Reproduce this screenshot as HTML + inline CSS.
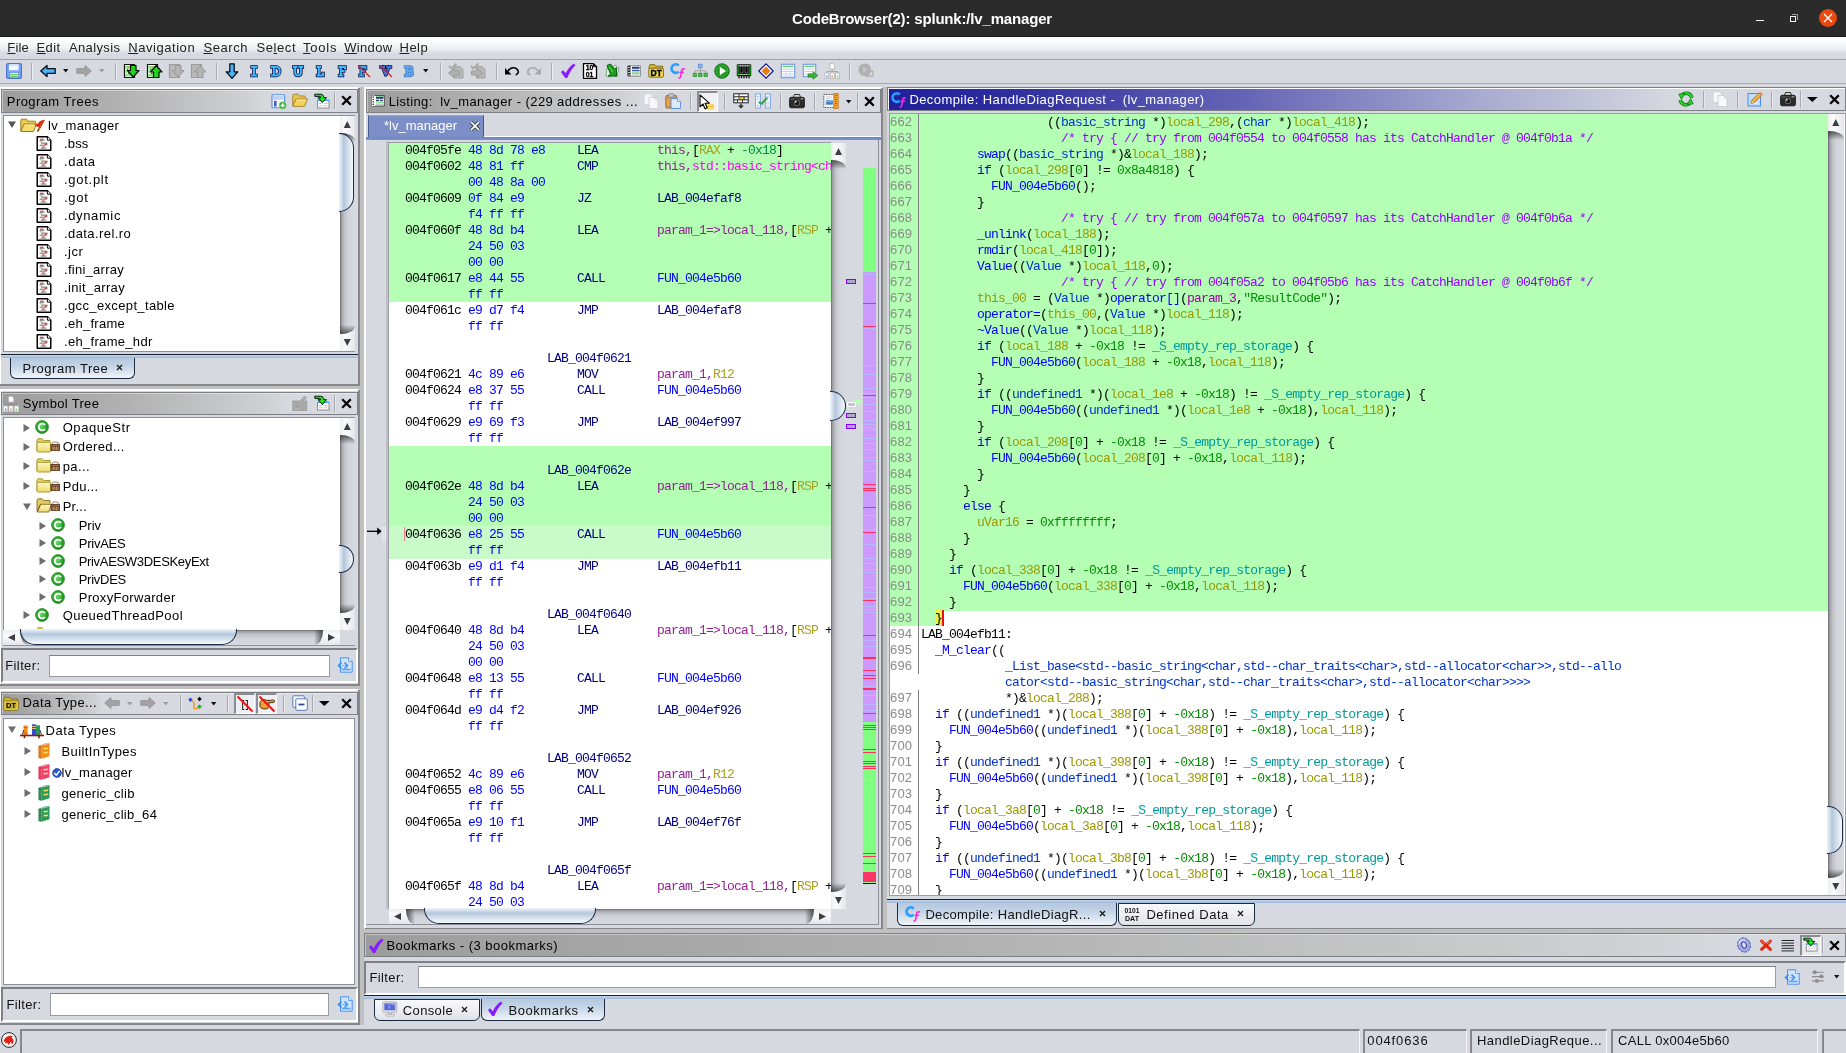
<!DOCTYPE html><html><head><meta charset="utf-8"><title>CodeBrowser</title><style>
html,body{margin:0;padding:0}
html{width:1846px;height:1053px;overflow:hidden}
body{width:1846px;height:1053px;overflow:hidden;background:#d6d9df;position:relative;font-family:"Liberation Sans",sans-serif}
div{position:absolute;box-sizing:border-box}
#w{left:0;top:0;width:1846px;height:1053px;will-change:transform;overflow:hidden}
.t{white-space:pre;line-height:16px;height:16px}
.m{font-family:"Liberation Mono",monospace;white-space:pre;font-size:13px;letter-spacing:-0.8px;line-height:16px;height:16px}
u{text-decoration:underline;text-underline-offset:1px}
</style></head><body><svg width="0" height="0" style="position:absolute"><defs><radialGradient id="gcls" cx="45%" cy="45%" r="60%"><stop offset="0" stop-color="#6ad86a"/><stop offset=".55" stop-color="#2eb02e"/><stop offset="1" stop-color="#148014"/></radialGradient><linearGradient id="gfold" x1="0" y1="0" x2="0" y2="1"><stop offset="0" stop-color="#fdf8c8"/><stop offset="1" stop-color="#ecd868"/></linearGradient></defs></svg><div id="w">
<div style="left:0px;top:0px;width:1846px;height:37px;background:#2b2b2b;border-bottom:1px solid #1a1a1a;"></div>
<div class="t" style="left:792px;top:10.80px;font-size:15px;letter-spacing:-0.174px;color:#fff;font-weight:bold;">CodeBrowser(2): splunk:/lv_manager</div>
<div style="left:1756px;top:19.8px;width:8.2px;height:1.5px;background:#f2f2f2;"></div>
<div style="left:1792px;top:14px;width:6.3px;height:6.3px;border-top:1px solid #9a9a9a;border-right:1px solid #9a9a9a;"></div>
<div style="left:1789.8px;top:15.8px;width:6.4px;height:6.4px;border:1.100px solid #f2f2f2;"></div>
<div style="left:1818.5px;top:8.8px;width:18.6px;height:18.6px;border-radius:10px;background:#e9480f;"></div>
<svg style="position:absolute;left:1822.800px;top:13.100px" width="10" height="10"><path d="M1 1L9 9M9 1L1 9" stroke="#fff" stroke-width="1.400" fill="none"/></svg>
<div style="left:0px;top:37px;width:1846px;height:23px;background:linear-gradient(#ffffff 0%,#fbfcfc 20%,#eef0f3 50%,#dadde3 72%,#d6d9df 78%);border-bottom:1px solid #9ea1a9;"></div>
<div class="t" style="left:7.3px;top:40.00px;font-size:13px;letter-spacing:0.188px;color:#222;"><u>F</u>ile</div>
<div class="t" style="left:36.5px;top:40.00px;font-size:13px;letter-spacing:0.425px;color:#222;"><u>E</u>dit</div>
<div class="t" style="left:68.9px;top:40.00px;font-size:13px;letter-spacing:0.386px;color:#222;">Analysis</div>
<div class="t" style="left:128.2px;top:40.00px;font-size:13px;letter-spacing:0.557px;color:#222;"><u>N</u>avigation</div>
<div class="t" style="left:203.4px;top:40.00px;font-size:13px;letter-spacing:0.601px;color:#222;"><u>S</u>earch</div>
<div class="t" style="left:256.5px;top:40.00px;font-size:13px;letter-spacing:0.578px;color:#222;">Se<u>l</u>ect</div>
<div class="t" style="left:303.1px;top:40.00px;font-size:13px;letter-spacing:0.750px;color:#222;"><u>T</u>ools</div>
<div class="t" style="left:344.2px;top:40.00px;font-size:13px;letter-spacing:0.344px;color:#222;"><u>W</u>indow</div>
<div class="t" style="left:399.5px;top:40.00px;font-size:13px;letter-spacing:0.491px;color:#222;"><u>H</u>elp</div>
<div style="left:0px;top:60px;width:1846px;height:24px;background:#d6d9df;"></div>
<div style="left:31px;top:63px;width:1px;height:17px;background:#a8abb1;"></div>
<div style="left:32px;top:63px;width:1px;height:17px;background:#eceef2;"></div>
<div style="left:115px;top:63px;width:1px;height:17px;background:#a8abb1;"></div>
<div style="left:116px;top:63px;width:1px;height:17px;background:#eceef2;"></div>
<div style="left:216px;top:63px;width:1px;height:17px;background:#a8abb1;"></div>
<div style="left:217px;top:63px;width:1px;height:17px;background:#eceef2;"></div>
<div style="left:440px;top:63px;width:1px;height:17px;background:#a8abb1;"></div>
<div style="left:441px;top:63px;width:1px;height:17px;background:#eceef2;"></div>
<div style="left:496px;top:63px;width:1px;height:17px;background:#a8abb1;"></div>
<div style="left:497px;top:63px;width:1px;height:17px;background:#eceef2;"></div>
<div style="left:551px;top:63px;width:1px;height:17px;background:#a8abb1;"></div>
<div style="left:552px;top:63px;width:1px;height:17px;background:#eceef2;"></div>
<div style="left:849px;top:63px;width:1px;height:17px;background:#a8abb1;"></div>
<div style="left:850px;top:63px;width:1px;height:17px;background:#eceef2;"></div>
<div style="left:6px;top:63px;width:16px;height:16px;"><svg width="100%" height="100%" viewBox="0 0 16 16" style="display:block;overflow:visible"><rect x="0.600" y="0.600" width="14.800" height="14.800" rx="1.500" fill="#7aa6f4" stroke="#4a72d8" stroke-width="1.200"/><rect x="3" y="1.200" width="9.500" height="6" fill="#f4f8ff"/><rect x="3" y="1.200" width="9.500" height="1.600" fill="#c8dcfa"/><rect x="3.500" y="9.500" width="9" height="5.300" fill="#dfeee0" stroke="#4a72d8" stroke-width=".5"/><rect x="4.300" y="11" width="7.400" height="1.300" fill="#68c868"/><rect x="4.300" y="13" width="7.400" height="1.100" fill="#68c868"/></svg></div>
<div style="left:40px;top:63px;width:16px;height:16px;"><svg width="100%" height="100%" viewBox="0 0 16 16" style="display:block;overflow:visible"><path d="M0.800 8l6.200-5.500v3.200h8.200v4.600h-8.200v3.200z" fill="#4ab4f8" stroke="#05101c" stroke-width="1.300" stroke-linejoin="round"/></svg></div>
<div style="left:58px;top:63px;width:16px;height:16px;"><svg width="100%" height="100%" viewBox="0 0 16 16" style="display:block;overflow:visible"><path d="M5 6h5.400l-2.700 3.600z" fill="#111"/></svg></div>
<div style="left:76px;top:63px;width:16px;height:16px;"><svg width="100%" height="100%" viewBox="0 0 16 16" style="display:block;overflow:visible"><path d="M15.200 8l-6.200-5.500v3.200h-8.200v4.600h8.200v3.200z" fill="#a4a4a4" stroke="#969696" stroke-width="1" stroke-linejoin="round"/></svg></div>
<div style="left:94px;top:63px;width:16px;height:16px;"><svg width="100%" height="100%" viewBox="0 0 16 16" style="display:block;overflow:visible"><path d="M5 6h5.400l-2.700 3.600z" fill="#9c9c9c"/></svg></div>
<div style="left:123px;top:63px;width:16px;height:16px;"><svg width="100%" height="100%" viewBox="0 0 16 16" style="display:block;overflow:visible"><path d="M1.5 1.5h10v13h-10z" fill="#fff" stroke="#111" stroke-width="1.2"/><rect x="2.3" y="3" width="8.4" height="2.600" fill="#7de87d"/><rect x="2.300" y="7" width="8.400" height="2.600" fill="#7de87d"/><rect x="2.300" y="11" width="8.400" height="2.400" fill="#7de87d"/><rect x="4" y="5.800" width="1.500" height="1.200" fill="#d22"/><rect x="5" y="9.800" width="1.500" height="1.200" fill="#d22"/><rect x="4.500" y="3.500" width="3" height="1" fill="#e8a060"/><path d="M7.500 2.500h5.500v5h3l-5.800 6.500l-5.700-6.500h3z" fill="#22d422" stroke="#041004" stroke-width="1.200" stroke-linejoin="round"/></svg></div>
<div style="left:146px;top:63px;width:16px;height:16px;"><svg width="100%" height="100%" viewBox="0 0 16 16" style="display:block;overflow:visible"><path d="M1.5 1.5h10v13h-10z" fill="#fff" stroke="#111" stroke-width="1.2"/><rect x="2.3" y="3" width="8.4" height="2.600" fill="#7de87d"/><rect x="2.300" y="7" width="8.400" height="2.600" fill="#7de87d"/><rect x="2.300" y="11" width="8.400" height="2.400" fill="#7de87d"/><rect x="4" y="5.800" width="1.500" height="1.200" fill="#d22"/><rect x="5" y="9.800" width="1.500" height="1.200" fill="#d22"/><rect x="4.500" y="3.500" width="3" height="1" fill="#e8a060"/><path d="M7.500 14.500h5.500v-5.500h3l-5.800-6.500l-5.700 6.500h3z" fill="#22d422" stroke="#041004" stroke-width="1.200" stroke-linejoin="round"/></svg></div>
<div style="left:168px;top:63px;width:16px;height:16px;"><svg width="100%" height="100%" viewBox="0 0 16 16" style="display:block;overflow:visible"><path d="M1.500 1.500h10v13h-10z" fill="#b8b8b8" stroke="#9c9c9c" stroke-width="1.200"/><path d="M7.500 2.500h5.500v5h3l-5.800 6.500l-5.700-6.500h3z" fill="#b4b4b4" stroke="#9c9c9c" stroke-width="1.100" stroke-linejoin="round"/></svg></div>
<div style="left:190px;top:63px;width:16px;height:16px;"><svg width="100%" height="100%" viewBox="0 0 16 16" style="display:block;overflow:visible"><path d="M1.500 1.500h10v13h-10z" fill="#b8b8b8" stroke="#9c9c9c" stroke-width="1.200"/><path d="M7.500 14.500h5.500v-5.500h3l-5.800-6.500l-5.700 6.500h3z" fill="#b4b4b4" stroke="#9c9c9c" stroke-width="1.100" stroke-linejoin="round"/></svg></div>
<div style="left:224px;top:63px;width:16px;height:16px;"><svg width="100%" height="100%" viewBox="0 0 16 16" style="display:block;overflow:visible"><path d="M5.800 0.800h4.400v8h3.600l-5.800 6.600l-5.800-6.600h3.600z" fill="#4ab4f8" stroke="#05101c" stroke-width="1.300" stroke-linejoin="round"/></svg></div>
<div style="left:246px;top:63px;width:16px;height:16px;"><svg width="100%" height="100%" viewBox="0 0 16 16" style="display:block;overflow:visible"><path d="M6 4h4M8 4v8.500M6 12.500h4" fill="none" stroke="#0a1040" stroke-width="3.5" stroke-linecap="square" stroke-linejoin="miter"/><path d="M6 4h4M8 4v8.500M6 12.500h4" fill="none" stroke="#40b4ff" stroke-width="2" stroke-linecap="square" stroke-linejoin="miter"/></svg></div>
<div style="left:268px;top:63px;width:16px;height:16px;"><svg width="100%" height="100%" viewBox="0 0 16 16" style="display:block;overflow:visible"><path d="M4 4h4c5 0 5 8.500 0 8.500h-4M5.800 4v8.500" fill="none" stroke="#0a1040" stroke-width="3.5" stroke-linecap="square" stroke-linejoin="miter"/><path d="M4 4h4c5 0 5 8.500 0 8.500h-4M5.800 4v8.500" fill="none" stroke="#40b4ff" stroke-width="2" stroke-linecap="square" stroke-linejoin="miter"/></svg></div>
<div style="left:290px;top:63px;width:16px;height:16px;"><svg width="100%" height="100%" viewBox="0 0 16 16" style="display:block;overflow:visible"><path d="M3.800 4h2.800M9.500 4h2.800M5.200 4v5.500c0 4 5.700 4 5.700 0v-5.500" fill="none" stroke="#0a1040" stroke-width="3.5" stroke-linecap="square" stroke-linejoin="miter"/><path d="M3.800 4h2.800M9.500 4h2.800M5.200 4v5.500c0 4 5.700 4 5.700 0v-5.500" fill="none" stroke="#40b4ff" stroke-width="2" stroke-linecap="square" stroke-linejoin="miter"/></svg></div>
<div style="left:312px;top:63px;width:16px;height:16px;"><svg width="100%" height="100%" viewBox="0 0 16 16" style="display:block;overflow:visible"><path d="M5.500 4h2.500M6.800 4v8.500M5.500 12.500h5.500v-2" fill="none" stroke="#0a1040" stroke-width="3.5" stroke-linecap="square" stroke-linejoin="miter"/><path d="M5.500 4h2.500M6.800 4v8.500M5.500 12.500h5.500v-2" fill="none" stroke="#40b4ff" stroke-width="2" stroke-linecap="square" stroke-linejoin="miter"/></svg></div>
<div style="left:334px;top:63px;width:16px;height:16px;"><svg width="100%" height="100%" viewBox="0 0 16 16" style="display:block;overflow:visible"><path d="M5.500 4h5.500v1.500M6.800 4v8.500M5.500 12.500h3M6.800 8h2.700" fill="none" stroke="#0a1040" stroke-width="3.5" stroke-linecap="square" stroke-linejoin="miter"/><path d="M5.500 4h5.500v1.500M6.800 4v8.500M5.500 12.500h3M6.800 8h2.700" fill="none" stroke="#40b4ff" stroke-width="2" stroke-linecap="square" stroke-linejoin="miter"/></svg></div>
<div style="left:356px;top:63px;width:16px;height:16px;"><svg width="100%" height="100%" viewBox="0 0 16 16" style="display:block;overflow:visible"><path d="M4 4h5.500v1.500M5.300 4v8.500M4 12.500h3M5.300 8h2.700" fill="none" stroke="#0a1040" stroke-width="3.5" stroke-linecap="square" stroke-linejoin="miter"/><path d="M4 4h5.500v1.500M5.300 4v8.500M4 12.500h3M5.300 8h2.700" fill="none" stroke="#3aa8f4" stroke-width="2" stroke-linecap="square" stroke-linejoin="miter"/><path d="M2.500 2.500L14 14" stroke="#e81818" stroke-width="1.300"/></svg></div>
<div style="left:378px;top:63px;width:16px;height:16px;"><svg width="100%" height="100%" viewBox="0 0 16 16" style="display:block;overflow:visible"><path d="M3 4h3M9.500 4h3M4.600 4l3.200 8l3.200-8" fill="none" stroke="#0a1040" stroke-width="3.5" stroke-linecap="square" stroke-linejoin="round"/><path d="M3 4h3M9.500 4h3M4.600 4l3.200 8l3.200-8" fill="none" stroke="#3a78e8" stroke-width="2" stroke-linecap="square" stroke-linejoin="round"/><path d="M2.500 2.500L14 14" stroke="#e81818" stroke-width="1.300"/></svg></div>
<div style="left:400.5px;top:63px;width:16px;height:16px;"><svg width="100%" height="100%" viewBox="0 0 16 16" style="display:block;overflow:visible"><path d="M4.500 4h4c3.200 0 3.200 4 0 4h-2.500M8.500 8c4 0 4 4.500 0 4.500h-4M6.200 4v8.500" fill="none" stroke="#4a7cc4" stroke-width="3.3" stroke-linecap="square" stroke-linejoin="miter"/><path d="M4.500 4h4c3.200 0 3.200 4 0 4h-2.500M8.500 8c4 0 4 4.500 0 4.500h-4M6.200 4v8.500" fill="none" stroke="#5aa4ec" stroke-width="2" stroke-linecap="square" stroke-linejoin="miter"/></svg></div>
<div style="left:418.2px;top:63px;width:16px;height:16px;"><svg width="100%" height="100%" viewBox="0 0 16 16" style="display:block;overflow:visible"><path d="M5 6h5.400l-2.700 3.600z" fill="#111"/></svg></div>
<div style="left:448px;top:63px;width:16px;height:16px;"><svg width="100%" height="100%" viewBox="0 0 16 16" style="display:block;overflow:visible"><path d="M6 3.500h6l3 3v8.500h-9z" fill="#b8b8b8" stroke="#a2a2a2"/><path d="M0.500 10l6-5v3h5v4h-5v3z" fill="#b0b0b0" stroke="#9a9a9a"/><path d="M1 3l2.500 2.500l5-5" fill="none" stroke="#a8a8a8" stroke-width="1.800"/></svg></div>
<div style="left:470px;top:63px;width:16px;height:16px;"><svg width="100%" height="100%" viewBox="0 0 16 16" style="display:block;overflow:visible"><path d="M7 3.500h5l3 3v8.500h-8z" fill="#b8b8b8" stroke="#a2a2a2"/><path d="M12.500 10l-6-5v3h-5v4h5v3z" fill="#b0b0b0" stroke="#9a9a9a"/><path d="M1 3l2.500 2.500l5-5" fill="none" stroke="#a8a8a8" stroke-width="1.800"/></svg></div>
<div style="left:504px;top:63px;width:16px;height:16px;"><svg width="100%" height="100%" viewBox="0 0 16 16" style="display:block;overflow:visible"><path d="M1 5v6.500h6.500z" fill="#000"/><path d="M4 8.200c2-4 7.500-5 10-0.700c.7 1.500 0 3.200-1.800 4.200" fill="none" stroke="#000" stroke-width="1.500" stroke-linecap="round"/></svg></div>
<div style="left:526px;top:63px;width:16px;height:16px;"><svg width="100%" height="100%" viewBox="0 0 16 16" style="display:block;overflow:visible"><path d="M15 5v6.500h-6.500z" fill="#a8a8a8"/><path d="M12 8.200c-2-4-7.500-5-10-0.700c-.7 1.500 0 3.200 1.800 4.200" fill="none" stroke="#a8a8a8" stroke-width="1.500" stroke-linecap="round"/></svg></div>
<div style="left:560px;top:63px;width:16px;height:16px;"><svg width="100%" height="100%" viewBox="0 0 16 16" style="display:block;overflow:visible"><path d="M1 9l2-1.800l2.800 3c2-4 4.500-7.200 8-9.700l1.700 1.700c-3.500 3.200-6 7.200-8.300 12.800h-2z" fill="#8a1aff"/></svg></div>
<div style="left:582px;top:63px;width:16px;height:16px;"><svg width="100%" height="100%" viewBox="0 0 16 16" style="display:block;overflow:visible"><path d="M1.500 0.700h10l3 3v11.600h-13z" fill="#fff" stroke="#000" stroke-width="1.300"/><path d="M11.500 0.700v3h3" fill="none" stroke="#000" stroke-width="1"/><text x="7.600" y="7.300" font-family="Liberation Sans" font-weight="bold" font-size="6.800" text-anchor="middle" fill="#000" stroke="#000" stroke-width=".3">10</text><text x="7.600" y="13.500" font-family="Liberation Sans" font-weight="bold" font-size="6.800" text-anchor="middle" fill="#000" stroke="#000" stroke-width=".3">01</text></svg></div>
<div style="left:604px;top:63px;width:16px;height:16px;"><svg width="100%" height="100%" viewBox="0 0 16 16" style="display:block;overflow:visible"><path d="M2 13l1-8l4 2l4-5l4 3l-2 9l-4-1.500l-3 1.500z" fill="#e8f4e8" stroke="#2a7a3a" stroke-width=".6"/><path d="M3 2.500l3.500-1.500l4 5l2-1.500v8.500h-8.500l2.500-2z" fill="#1ca01c" stroke="#0a500a" stroke-width=".9" stroke-linejoin="round"/><path d="M5 4l4 5" stroke="#5ad85a" stroke-width="1.200"/></svg></div>
<div style="left:626px;top:63px;width:16px;height:16px;"><svg width="100%" height="100%" viewBox="0 0 16 16" style="display:block;overflow:visible"><rect x="2.300" y="2.800" width="12" height="10.400" fill="#fff" stroke="#777" stroke-width=".8"/><rect x="1.500" y="2.800" width="3" height="10.400" fill="#222"/><path d="M2.200 4.500h1.500M2.200 7h1.500M2.200 9.500h1.500M2.200 12h1.500" stroke="#fff" stroke-width="1"/><rect x="6" y="3.800" width="7.500" height="2" fill="#2a3a8a"/><rect x="6" y="6.800" width="7.500" height="1.500" fill="#3a5aa0"/><rect x="6" y="9.300" width="7.500" height="1.600" fill="#7ad87a"/><path d="M6 12h7.500" stroke="#aaa" stroke-width=".8"/></svg></div>
<div style="left:648px;top:63px;width:16px;height:16px;"><svg width="100%" height="100%" viewBox="0 0 16 16" style="display:block;overflow:visible"><path d="M1 3.800l1-2.300h4.500l1.200 1.700h7v2.500h-13.700z" fill="#d8b82a" stroke="#7a6410" stroke-width=".9"/><rect x="0.800" y="5.200" width="14.600" height="9" rx="1" fill="#f4dc50" stroke="#7a6410" stroke-width=".9"/><text x="8.200" y="13" font-family="Liberation Sans" font-weight="bold" font-size="8.500" text-anchor="middle" fill="#000" stroke="#000" stroke-width=".4">DT</text></svg></div>
<div style="left:670px;top:63px;width:16px;height:16px;"><svg width="100%" height="100%" viewBox="0 0 16 16" style="display:block;overflow:visible"><path d="M8.700 2.600a4.200 4.200 0 1 0 0 6" fill="none" stroke="#2a9cff" stroke-width="2.700"/><path d="M14.800 6.300c-1.600-.9-2.800-.2-3.100 1.400l-1 5.800c-.2 1.400-1.200 1.800-2.200 1.200" fill="none" stroke="#ff22e6" stroke-width="1.600"/><path d="M9.800 9.300h4.200" stroke="#ff22e6" stroke-width="1.400"/></svg></div>
<div style="left:692px;top:63px;width:16px;height:16px;"><svg width="100%" height="100%" viewBox="0 0 16 16" style="display:block;overflow:visible"><rect x="6.500" y="1.200" width="3.600" height="3.600" fill="#8ab4f4" stroke="#5a88d8" stroke-width=".7"/><path d="M8.300 5v2.800M2.900 10v-2.200h10.800v2.200M8.300 7.800v2.200" fill="none" stroke="#9a9a9a" stroke-width=".8"/><rect x="1.200" y="10.200" width="3.400" height="3.400" fill="#4ac04a" stroke="#2a8a2a" stroke-width=".7"/><rect x="6.600" y="10.200" width="3.400" height="3.400" fill="#4ac04a" stroke="#2a8a2a" stroke-width=".7"/><rect x="12" y="10.200" width="3.400" height="3.400" fill="#4ac04a" stroke="#2a8a2a" stroke-width=".7"/></svg></div>
<div style="left:714px;top:63px;width:16px;height:16px;"><svg width="100%" height="100%" viewBox="0 0 16 16" style="display:block;overflow:visible"><circle cx="8" cy="8" r="7.300" fill="#1f9a1f" stroke="#0c5c0c" stroke-width=".8"/><circle cx="8" cy="8" r="5.800" fill="none" stroke="#5ad05a" stroke-width=".8" stroke-dasharray="1 1"/><path d="M5.800 3.800l6.400 4.200l-6.400 4.200z" fill="#fff"/></svg></div>
<div style="left:736px;top:63px;width:16px;height:16px;"><svg width="100%" height="100%" viewBox="0 0 16 16" style="display:block;overflow:visible"><rect x="0.800" y="1.200" width="14.400" height="12" rx="1" fill="#000"/><rect x="2" y="2.500" width="12" height="9" fill="none" stroke="#28e028" stroke-width="1"/><rect x="4" y="3.500" width="3" height="6.500" fill="#000" stroke="#bbb" stroke-width=".5"/><rect x="9" y="3.500" width="3" height="6.500" fill="#000" stroke="#bbb" stroke-width=".5"/><path d="M3 13.200v2M5.500 13.200v2M8 13.200v2M10.500 13.200v2M13 13.200v2" stroke="#000" stroke-width="1.300"/><path d="M4 11.500h8" stroke="#ddd" stroke-width=".8" stroke-dasharray="1 1"/></svg></div>
<div style="left:758px;top:63px;width:16px;height:16px;"><svg width="100%" height="100%" viewBox="0 0 16 16" style="display:block;overflow:visible"><path d="M8 0.800l7.200 7.200l-7.200 7.200l-7.200-7.200z" fill="#fff" stroke="#10108a" stroke-width="1.200"/><path d="M8 3.600l4.400 4.400l-4.400 4.400l-4.400-4.400z" fill="#e87a10"/></svg></div>
<div style="left:780px;top:63px;width:16px;height:16px;"><svg width="100%" height="100%" viewBox="0 0 16 16" style="display:block;overflow:visible"><rect x="1.300" y="1.300" width="13.400" height="13.400" fill="#fff" stroke="#7aa0e0" stroke-width="1.200"/><path d="M2.500 3.300h11" stroke="#5ac85a" stroke-width="1.200"/><path d="M2.500 6h11M2.500 8.500h11M2.500 11h11M2.500 13.200h11" stroke="#b8ccec" stroke-width=".9"/><path d="M6 5v9M10.500 5v9" stroke="#d0dcf0" stroke-width=".8"/></svg></div>
<div style="left:802px;top:63px;width:16px;height:16px;"><svg width="100%" height="100%" viewBox="0 0 16 16" style="display:block;overflow:visible"><rect x="1.300" y="1.300" width="12.400" height="12.400" fill="#fff" stroke="#7aa0e0" stroke-width="1.200"/><path d="M2.500 3.300h10" stroke="#5ac85a" stroke-width="1.200"/><path d="M2.500 6h10M2.500 8.500h10M2.500 11h10" stroke="#b8ccec" stroke-width=".9"/><path d="M6 11h5v-2.200l4.800 3.700l-4.800 3.700v-2.200h-5z" fill="#3ab43a" stroke="#1a7a1a" stroke-width=".7"/></svg></div>
<div style="left:824px;top:63px;width:16px;height:16px;"><svg width="100%" height="100%" viewBox="0 0 16 16" style="display:block;overflow:visible"><path d="M6 0.500h3l1.500 1.500v4h-4.500z" fill="#fff" stroke="#b4b4b4" stroke-width=".8"/><path d="M8.200 6v2.500M2.700 10.500v-2h11v2" fill="none" stroke="#a0a0a0" stroke-width=".9"/><rect x="0.800" y="10" width="4" height="5.300" fill="#fff" stroke="#b4b4b4" stroke-width=".8"/><rect x="6.200" y="10" width="4" height="5.300" fill="#fff" stroke="#b4b4b4" stroke-width=".8"/><rect x="11.600" y="10" width="4" height="5.300" fill="#fff" stroke="#b4b4b4" stroke-width=".8"/><rect x="2" y="12.500" width="1.600" height="2" fill="#6a9cf0"/><rect x="7.400" y="12.500" width="1.600" height="2" fill="#f0a050"/><rect x="12.800" y="12.500" width="1.600" height="2" fill="#7ae07a"/></svg></div>
<div style="left:858px;top:63px;width:16px;height:16px;"><svg width="100%" height="100%" viewBox="0 0 16 16" style="display:block;overflow:visible"><circle cx="6.800" cy="6.800" r="6.300" fill="#b0b0b0"/><path d="M5 3.500l5 3.300l-5 3.300z" fill="#c4c4c4"/><rect x="9" y="8" width="6" height="5" fill="none" stroke="#b0b0b0" stroke-width="1.300"/><path d="M7 12.500l2.500-2v4z" fill="#b0b0b0"/></svg></div>
<div style="left:0px;top:83.2px;width:1846px;height:1px;background:#a8aaae;"></div>
<div style="left:360px;top:87px;width:4px;height:938px;background:#c0c0c0;"></div>
<div style="left:883px;top:87px;width:4px;height:842px;background:#c0c0c0;"></div>
<div style="left:360px;top:929px;width:1486px;height:4px;background:#c0c0c0;"></div>
<div style="left:0px;top:385.5px;width:360px;height:3.5px;background:#c0c0c0;"></div>
<div style="left:0px;top:685.5px;width:360px;height:3.5px;background:#c0c0c0;"></div>
<div style="left:0px;top:87px;width:358px;height:2px;background:#fff;"></div>
<div style="left:0px;top:87px;width:1.3px;height:296.5px;background:#fff;"></div>
<div style="left:0px;top:383.5px;width:360px;height:2px;background:#85878c;"></div>
<div style="left:358px;top:88px;width:2px;height:297.5px;background:#85878c;"></div>
<div style="left:0px;top:389px;width:358px;height:2px;background:#fff;"></div>
<div style="left:0px;top:389px;width:1.3px;height:294.5px;background:#fff;"></div>
<div style="left:0px;top:683.5px;width:360px;height:2px;background:#85878c;"></div>
<div style="left:358px;top:390px;width:2px;height:295.5px;background:#85878c;"></div>
<div style="left:0px;top:689px;width:358px;height:2px;background:#fff;"></div>
<div style="left:0px;top:689px;width:1.3px;height:334px;background:#fff;"></div>
<div style="left:0px;top:1023px;width:360px;height:2px;background:#85878c;"></div>
<div style="left:358px;top:690px;width:2px;height:335px;background:#85878c;"></div>
<div style="left:364px;top:87px;width:518px;height:2px;background:#fff;"></div>
<div style="left:364px;top:87px;width:2px;height:841px;background:#fff;"></div>
<div style="left:881px;top:88px;width:2px;height:841px;background:#85878c;"></div>
<div style="left:365px;top:927.5px;width:518px;height:1.5px;background:#85878c;"></div>
<div style="left:887px;top:927.5px;width:959px;height:1.5px;background:#85878c;"></div>
<div style="left:1px;top:89px;width:357px;height:24px;border:1px solid #7e8085;background:linear-gradient(to right,#9c9c9c 0.00%,#b2b2b2 33.72%,#cfd0d3 68.94%,#d6d9df 74.93%);box-shadow:inset 1px 1px 0 rgba(255,255,255,.4);"></div>
<div class="t" style="left:6.85px;top:94.00px;font-size:13px;letter-spacing:0.407px;color:#000;">Program</div>
<div class="t" style="left:63.5px;top:94.00px;font-size:13px;letter-spacing:0.550px;color:#000;">Trees</div>
<div style="left:271px;top:94px;width:15px;height:15px;"><svg width="100%" height="100%" viewBox="0 0 15 15.500" style="display:block;overflow:visible"><rect x="0.800" y="0.800" width="13" height="13.400" rx=".8" fill="#fff" stroke="#5a8ae4" stroke-width="1.200"/><rect x="2.500" y="2.800" width="9.600" height="2.600" fill="#bcd0f4" stroke="#9ab8ec" stroke-width=".5"/><rect x="2.800" y="7" width="2.800" height="6" fill="#4a5ac8"/><path d="M7 8h5M7 10h3" stroke="#d0dcf4" stroke-width="1"/><circle cx="11.800" cy="11.800" r="3.700" fill="#2cac2c" stroke="#9ad89a" stroke-width=".6"/><path d="M9.600 11.800h4.400M11.800 9.600v4.400" stroke="#fff" stroke-width="1.500"/></svg></div>
<div style="left:292px;top:93px;width:16px;height:14px;"><svg width="100%" height="100%" viewBox="0 0 16 14" style="display:block;overflow:visible"><path d="M0.800 12.500v-10c0-.8 .5-1.300 1.300-1.300h3.700l1.500 1.800h5c.8 0 1.300 .5 1.300 1.300v1.700" fill="#e8c850" stroke="#a8842a" stroke-width="1"/><path d="M0.800 13.300l3.200-7.300h11.500l-3 7.300z" fill="#f0d460" stroke="#a8842a" stroke-width="1"/><path d="M4.500 7h10" stroke="#fff0a8" stroke-width=".8"/></svg></div>
<div style="left:314px;top:93px;width:16px;height:16px;"><svg width="100%" height="100%" viewBox="0 0 16 16" style="display:block;overflow:visible"><rect x="3.500" y="7.500" width="11.500" height="7.500" fill="#fff" stroke="#8c8c8c" stroke-width="1"/><path d="M3.500 7.300h11.500" stroke="#3a9aff" stroke-width="1.400"/><path d="M5 10.500h3.500M9.800 10.500h3.800M5 12.700h3.500M9.800 12.700h3.800" stroke="#c8cad0" stroke-width="1"/><path d="M0.800 1.200h5.700c2.300 0 3.300 1.500 3.300 3.500h2.700l-4.200 4.800l-4.200-4.800h2.700c0-.9-.4-1.300-1.300-1.300h-4.700z" fill="#22e822" stroke="#000" stroke-width=".9" stroke-linejoin="round"/></svg></div>
<div style="left:334px;top:92px;width:1px;height:17px;background:#a6a8ae;"></div>
<div style="left:335px;top:92px;width:1px;height:17px;background:#e6e8ec;"></div>
<svg style="position:absolute;left:340.5px;top:95.3px" width="11" height="11"><path d="M1.200 1.200L9.8 9.8M9.8 1.200L1.200 9.8" stroke="#000" stroke-width="2.3" fill="none"/></svg>
<div style="left:2.5px;top:115px;width:352.8px;height:237px;background:#fff;border:1px solid #8e9197;"></div>
<svg style="position:absolute;left:7px;top:121px" width="10" height="8"><path d="M1 0.500L9 0.500L5 7Z" fill="#555"/></svg>
<div style="left:20px;top:118px;width:17px;height:14px;"><svg width="100%" height="100%" viewBox="0 0 17 14" style="display:block;overflow:visible"><path d="M0.800 13v-10.500c0-.8 .5-1.300 1.300-1.300h4.500l1.500 2h6.500c.8 0 1.300 .5 1.300 1.300v1.500" fill="#e8c850" stroke="#9a7a20" stroke-width="1"/><path d="M0.800 13.500l3.200-7.500h12.500l-3 7.500z" fill="#f4dc6a" stroke="#9a7a20" stroke-width="1"/><path d="M4.500 7h10.500" stroke="#fff4b0" stroke-width=".8"/></svg></div>
<div style="left:33.5px;top:119px;width:11px;height:13px;"><svg width="100%" height="100%" viewBox="0 0 11 13" style="display:block;overflow:visible"><path d="M3.500 12.500l6.500-11.500" stroke="#8a5a20" stroke-width="1.800"/><path d="M0 5.500c2 .5 4-.5 5-2.500c1.500-1.500 3.500-2 5.500-2l-4 7.500c-2-.3-4.500-1-6.500-3z" fill="#e02810"/><path d="M5 10l5-9" stroke="#c8c820" stroke-width=".6" stroke-dasharray="1 1"/></svg></div>
<div class="t" style="left:48px;top:118.00px;font-size:13px;letter-spacing:0.333px;color:#000;">lv_manager</div>
<div style="left:36px;top:136.3px;width:16px;height:15.5px;"><svg width="100%" height="100%" viewBox="0 0 16 16" style="display:block;overflow:visible"><path d="M1 0.800h10.500l3.500 3.500v10.500h-14z" fill="#fff" stroke="#000" stroke-width="1.500" stroke-linejoin="round"/><path d="M11.500 0.800v3.500h3.500" fill="#fff" stroke="#000" stroke-width="1"/><path d="M3.500 4.500h5M5 7.500h6.500M3.500 9.500h7M4.500 12.500h6" stroke="#9a9a9a" stroke-width="1.500"/><path d="M4 3.300h3.500M9 8.500h2.500M6 11.300h2.500" stroke="#c81a1a" stroke-width="1.100"/><path d="M3.500 6h3" stroke="#c8a060" stroke-width="1"/></svg></div>
<div class="t" style="left:64px;top:136.00px;font-size:13px;letter-spacing:0.148px;color:#000;">.bss</div>
<div style="left:36px;top:154.3px;width:16px;height:15.5px;"><svg width="100%" height="100%" viewBox="0 0 16 16" style="display:block;overflow:visible"><path d="M1 0.800h10.500l3.500 3.500v10.500h-14z" fill="#fff" stroke="#000" stroke-width="1.500" stroke-linejoin="round"/><path d="M11.500 0.800v3.500h3.500" fill="#fff" stroke="#000" stroke-width="1"/><path d="M3.500 4.500h5M5 7.500h6.500M3.500 9.500h7M4.500 12.500h6" stroke="#9a9a9a" stroke-width="1.500"/><path d="M4 3.300h3.500M9 8.500h2.500M6 11.300h2.500" stroke="#c81a1a" stroke-width="1.100"/><path d="M3.500 6h3" stroke="#c8a060" stroke-width="1"/></svg></div>
<div class="t" style="left:64px;top:154.00px;font-size:13px;letter-spacing:0.529px;color:#000;">.data</div>
<div style="left:36px;top:172.3px;width:16px;height:15.5px;"><svg width="100%" height="100%" viewBox="0 0 16 16" style="display:block;overflow:visible"><path d="M1 0.800h10.500l3.500 3.500v10.500h-14z" fill="#fff" stroke="#000" stroke-width="1.500" stroke-linejoin="round"/><path d="M11.500 0.800v3.500h3.500" fill="#fff" stroke="#000" stroke-width="1"/><path d="M3.500 4.500h5M5 7.500h6.500M3.500 9.500h7M4.500 12.500h6" stroke="#9a9a9a" stroke-width="1.500"/><path d="M4 3.300h3.500M9 8.500h2.500M6 11.300h2.500" stroke="#c81a1a" stroke-width="1.100"/><path d="M3.500 6h3" stroke="#c8a060" stroke-width="1"/></svg></div>
<div class="t" style="left:64px;top:172.00px;font-size:13px;letter-spacing:0.721px;color:#000;">.got.plt</div>
<div style="left:36px;top:190.3px;width:16px;height:15.5px;"><svg width="100%" height="100%" viewBox="0 0 16 16" style="display:block;overflow:visible"><path d="M1 0.800h10.500l3.500 3.500v10.500h-14z" fill="#fff" stroke="#000" stroke-width="1.500" stroke-linejoin="round"/><path d="M11.500 0.800v3.500h3.500" fill="#fff" stroke="#000" stroke-width="1"/><path d="M3.500 4.500h5M5 7.500h6.500M3.500 9.500h7M4.500 12.500h6" stroke="#9a9a9a" stroke-width="1.500"/><path d="M4 3.300h3.500M9 8.500h2.500M6 11.300h2.500" stroke="#c81a1a" stroke-width="1.100"/><path d="M3.500 6h3" stroke="#c8a060" stroke-width="1"/></svg></div>
<div class="t" style="left:64px;top:190.00px;font-size:13px;letter-spacing:0.687px;color:#000;">.got</div>
<div style="left:36px;top:208.3px;width:16px;height:15.5px;"><svg width="100%" height="100%" viewBox="0 0 16 16" style="display:block;overflow:visible"><path d="M1 0.800h10.500l3.500 3.500v10.500h-14z" fill="#fff" stroke="#000" stroke-width="1.500" stroke-linejoin="round"/><path d="M11.500 0.800v3.500h3.500" fill="#fff" stroke="#000" stroke-width="1"/><path d="M3.500 4.500h5M5 7.500h6.500M3.500 9.500h7M4.500 12.500h6" stroke="#9a9a9a" stroke-width="1.500"/><path d="M4 3.300h3.500M9 8.500h2.500M6 11.300h2.500" stroke="#c81a1a" stroke-width="1.100"/><path d="M3.500 6h3" stroke="#c8a060" stroke-width="1"/></svg></div>
<div class="t" style="left:64px;top:208.00px;font-size:13px;letter-spacing:0.623px;color:#000;">.dynamic</div>
<div style="left:36px;top:226.3px;width:16px;height:15.5px;"><svg width="100%" height="100%" viewBox="0 0 16 16" style="display:block;overflow:visible"><path d="M1 0.800h10.500l3.500 3.500v10.500h-14z" fill="#fff" stroke="#000" stroke-width="1.500" stroke-linejoin="round"/><path d="M11.500 0.800v3.500h3.500" fill="#fff" stroke="#000" stroke-width="1"/><path d="M3.500 4.500h5M5 7.500h6.500M3.500 9.500h7M4.500 12.500h6" stroke="#9a9a9a" stroke-width="1.500"/><path d="M4 3.300h3.500M9 8.500h2.500M6 11.300h2.500" stroke="#c81a1a" stroke-width="1.100"/><path d="M3.500 6h3" stroke="#c8a060" stroke-width="1"/></svg></div>
<div class="t" style="left:64px;top:226.00px;font-size:13px;letter-spacing:0.420px;color:#000;">.data.rel.ro</div>
<div style="left:36px;top:244.3px;width:16px;height:15.5px;"><svg width="100%" height="100%" viewBox="0 0 16 16" style="display:block;overflow:visible"><path d="M1 0.800h10.500l3.500 3.500v10.500h-14z" fill="#fff" stroke="#000" stroke-width="1.500" stroke-linejoin="round"/><path d="M11.500 0.800v3.500h3.500" fill="#fff" stroke="#000" stroke-width="1"/><path d="M3.500 4.500h5M5 7.500h6.500M3.500 9.500h7M4.500 12.500h6" stroke="#9a9a9a" stroke-width="1.500"/><path d="M4 3.300h3.500M9 8.500h2.500M6 11.300h2.500" stroke="#c81a1a" stroke-width="1.100"/><path d="M3.500 6h3" stroke="#c8a060" stroke-width="1"/></svg></div>
<div class="t" style="left:64px;top:244.00px;font-size:13px;letter-spacing:0.503px;color:#000;">.jcr</div>
<div style="left:36px;top:262.3px;width:16px;height:15.5px;"><svg width="100%" height="100%" viewBox="0 0 16 16" style="display:block;overflow:visible"><path d="M1 0.800h10.500l3.500 3.500v10.500h-14z" fill="#fff" stroke="#000" stroke-width="1.500" stroke-linejoin="round"/><path d="M11.500 0.800v3.500h3.500" fill="#fff" stroke="#000" stroke-width="1"/><path d="M3.500 4.500h5M5 7.500h6.500M3.500 9.500h7M4.500 12.500h6" stroke="#9a9a9a" stroke-width="1.500"/><path d="M4 3.300h3.500M9 8.500h2.500M6 11.300h2.500" stroke="#c81a1a" stroke-width="1.100"/><path d="M3.500 6h3" stroke="#c8a060" stroke-width="1"/></svg></div>
<div class="t" style="left:64px;top:262.00px;font-size:13px;letter-spacing:0.271px;color:#000;">.fini_array</div>
<div style="left:36px;top:280.3px;width:16px;height:15.5px;"><svg width="100%" height="100%" viewBox="0 0 16 16" style="display:block;overflow:visible"><path d="M1 0.800h10.500l3.500 3.500v10.500h-14z" fill="#fff" stroke="#000" stroke-width="1.500" stroke-linejoin="round"/><path d="M11.500 0.800v3.500h3.500" fill="#fff" stroke="#000" stroke-width="1"/><path d="M3.500 4.500h5M5 7.500h6.500M3.500 9.500h7M4.500 12.500h6" stroke="#9a9a9a" stroke-width="1.500"/><path d="M4 3.300h3.500M9 8.500h2.500M6 11.300h2.500" stroke="#c81a1a" stroke-width="1.100"/><path d="M3.500 6h3" stroke="#c8a060" stroke-width="1"/></svg></div>
<div class="t" style="left:64px;top:280.00px;font-size:13px;letter-spacing:0.364px;color:#000;">.init_array</div>
<div style="left:36px;top:298.3px;width:16px;height:15.5px;"><svg width="100%" height="100%" viewBox="0 0 16 16" style="display:block;overflow:visible"><path d="M1 0.800h10.500l3.500 3.500v10.500h-14z" fill="#fff" stroke="#000" stroke-width="1.500" stroke-linejoin="round"/><path d="M11.500 0.800v3.500h3.500" fill="#fff" stroke="#000" stroke-width="1"/><path d="M3.500 4.500h5M5 7.500h6.500M3.500 9.500h7M4.500 12.500h6" stroke="#9a9a9a" stroke-width="1.500"/><path d="M4 3.300h3.500M9 8.500h2.500M6 11.300h2.500" stroke="#c81a1a" stroke-width="1.100"/><path d="M3.500 6h3" stroke="#c8a060" stroke-width="1"/></svg></div>
<div class="t" style="left:64px;top:298.00px;font-size:13px;letter-spacing:0.363px;color:#000;">.gcc_except_table</div>
<div style="left:36px;top:316.3px;width:16px;height:15.5px;"><svg width="100%" height="100%" viewBox="0 0 16 16" style="display:block;overflow:visible"><path d="M1 0.800h10.500l3.500 3.500v10.500h-14z" fill="#fff" stroke="#000" stroke-width="1.500" stroke-linejoin="round"/><path d="M11.500 0.800v3.500h3.500" fill="#fff" stroke="#000" stroke-width="1"/><path d="M3.500 4.500h5M5 7.500h6.500M3.500 9.500h7M4.500 12.500h6" stroke="#9a9a9a" stroke-width="1.500"/><path d="M4 3.300h3.500M9 8.500h2.500M6 11.300h2.500" stroke="#c81a1a" stroke-width="1.100"/><path d="M3.500 6h3" stroke="#c8a060" stroke-width="1"/></svg></div>
<div class="t" style="left:64px;top:316.00px;font-size:13px;letter-spacing:0.283px;color:#000;">.eh_frame</div>
<div style="left:36px;top:334.3px;width:16px;height:15.5px;"><svg width="100%" height="100%" viewBox="0 0 16 16" style="display:block;overflow:visible"><path d="M1 0.800h10.500l3.500 3.500v10.500h-14z" fill="#fff" stroke="#000" stroke-width="1.500" stroke-linejoin="round"/><path d="M11.500 0.800v3.500h3.500" fill="#fff" stroke="#000" stroke-width="1"/><path d="M3.500 4.500h5M5 7.500h6.500M3.500 9.500h7M4.500 12.500h6" stroke="#9a9a9a" stroke-width="1.500"/><path d="M4 3.300h3.500M9 8.500h2.500M6 11.300h2.500" stroke="#c81a1a" stroke-width="1.100"/><path d="M3.500 6h3" stroke="#c8a060" stroke-width="1"/></svg></div>
<div class="t" style="left:64px;top:334.00px;font-size:13px;letter-spacing:0.309px;color:#000;">.eh_frame_hdr</div>
<div style="left:340px;top:116px;width:14.5px;height:235px;background:linear-gradient(to right,#eceef1 0%,#fbfbfc 35%,#e4e6ea 100%);"></div>
<div style="left:340px;top:133px;width:14.5px;height:201px;border-radius:0 14.5px 14.5px 0 / 0 8px 8px 0;background:linear-gradient(to right,#64666b 0%,#9c9ea3 10%,#bfc1c6 28%,#d1d4da 55%,#d6d9df 100%);"></div>
<div style="left:340px;top:133px;width:14.5px;height:9px;border-radius:0 14.5px 0 0 / 0 8px 0 0;background:linear-gradient(rgba(40,42,46,.75),rgba(40,42,46,0));"></div>
<div style="left:340px;top:325px;width:14.5px;height:9px;border-radius:0 0 14.5px 0 / 0 0 8px 0;background:linear-gradient(rgba(40,42,46,0),rgba(40,42,46,.75));"></div>
<svg style="position:absolute;left:340px;top:116px" width="14.5" height="16"><path d="M3.75 12L7.25 5L10.75 12Z" fill="#3c3e42"/></svg>
<svg style="position:absolute;left:340px;top:334px" width="14.5" height="16"><path d="M3.75 5L7.25 12L10.75 5Z" fill="#3c3e42"/></svg>
<div style="left:339px;top:133px;width:15.1px;height:78.7px;border:1.200px solid #1c2c48;border-left:none;border-radius:0 15px 15px 0;background:linear-gradient(to right,#f0f4f9 0%,#b4c8dc 35%,#cfdcea 60%,#f6f9fc 100%);"></div>
<div style="left:1px;top:354px;width:357px;height:1px;background:#15202e;"></div>
<div style="left:1px;top:355px;width:357px;height:3px;background:linear-gradient(#c6d9ee,#9db6d4);"></div>
<div style="left:10px;top:358px;width:124.7px;height:21.4px;border:1px solid #1c2a40;border-top:none;border-radius:0 0 6px 6px;background:linear-gradient(#b4c8de 0%,#c3d4e6 40%,#f0f4f9 100%);"></div>
<div class="t" style="left:22.5px;top:361.00px;font-size:13px;letter-spacing:0.527px;color:#111;">Program Tree</div>
<svg style="position:absolute;left:116.2px;top:364.2px" width="7" height="7"><path d="M1 1L6 6M6 1L1 6" stroke="#1a1a1a" stroke-width="1.250" fill="none"/></svg>
<div style="left:1px;top:391.5px;width:357px;height:23px;border:1px solid #7e8085;background:linear-gradient(to right,#9c9c9c 0.00%,#b2b2b2 36.51%,#cfd0d3 74.64%,#d6d9df 81.13%);box-shadow:inset 1px 1px 0 rgba(255,255,255,.4);"></div>
<div style="left:3.2px;top:395.8px;width:16px;height:16px;"><svg width="100%" height="100%" viewBox="0 0 16 16" style="display:block;overflow:visible"><path d="M5.800 0.500h3.200l1.500 1.500v4h-4.700z" fill="#fff" stroke="#c4c4c4" stroke-width=".7"/><path d="M8 6v2.500M2.500 10.500v-2h11v2" fill="none" stroke="#8c8c8c" stroke-width=".8"/><rect x="0.600" y="10" width="4" height="5.500" fill="#fff" stroke="#c4c4c4" stroke-width=".7"/><rect x="6" y="10" width="4" height="5.500" fill="#fff" stroke="#c4c4c4" stroke-width=".7"/><rect x="11.400" y="10" width="4" height="5.500" fill="#fff" stroke="#c4c4c4" stroke-width=".7"/><rect x="1.800" y="12.500" width="1.600" height="2.200" fill="#6a9cf0"/><rect x="7.200" y="12.500" width="1.600" height="2.200" fill="#f0a050"/><rect x="12.600" y="12.500" width="1.600" height="2.200" fill="#7ae07a"/></svg></div>
<div class="t" style="left:22.8px;top:396.00px;font-size:13px;letter-spacing:0.311px;color:#000;">Symbol Tree</div>
<div style="left:291.5px;top:395px;width:16px;height:16px;"><svg width="100%" height="100%" viewBox="0 0 16 16" style="display:block;overflow:visible"><rect x="0.800" y="6" width="14" height="9.500" fill="#a8a8a8" stroke="#9c9c9c" stroke-width=".8"/><path d="M3 13.500h5.500" stroke="#b8b8b8" stroke-width="1"/><path d="M4.500 12.500l1.500-4l6.500-7.500l2 1.700l-6.500 7.500z" fill="#b4b4b4" stroke="#9a9a9a" stroke-width=".8"/><path d="M7 7.500l2 1.700M8.500 5.800l2 1.700M10 4l2 1.700" stroke="#9a9a9a" stroke-width=".7"/></svg></div>
<div style="left:314px;top:395px;width:16px;height:16px;"><svg width="100%" height="100%" viewBox="0 0 16 16" style="display:block;overflow:visible"><rect x="3.500" y="7.500" width="11.500" height="7.500" fill="#fff" stroke="#8c8c8c" stroke-width="1"/><path d="M3.500 7.300h11.500" stroke="#3a9aff" stroke-width="1.400"/><path d="M5 10.500h3.500M9.800 10.500h3.800M5 12.700h3.500M9.800 12.700h3.800" stroke="#c8cad0" stroke-width="1"/><path d="M0.800 1.200h5.700c2.300 0 3.300 1.500 3.300 3.500h2.700l-4.200 4.800l-4.200-4.800h2.700c0-.9-.4-1.300-1.300-1.300h-4.700z" fill="#22e822" stroke="#000" stroke-width=".9" stroke-linejoin="round"/></svg></div>
<div style="left:334px;top:394.5px;width:1px;height:17px;background:#a6a8ae;"></div>
<div style="left:335px;top:394.5px;width:1px;height:17px;background:#e6e8ec;"></div>
<svg style="position:absolute;left:340.6px;top:397.8px" width="11" height="11"><path d="M1.200 1.200L9.8 9.8M9.8 1.200L1.200 9.8" stroke="#000" stroke-width="2.3" fill="none"/></svg>
<div style="left:2.5px;top:417px;width:352.8px;height:229px;background:#fff;border:1px solid #8e9197;"></div>
<svg style="position:absolute;left:22.8px;top:422.8px" width="8" height="10"><path d="M0.500 1L7 5L0.500 9Z" fill="#6e6e6e"/></svg>
<div style="left:34.5px;top:420.4px;width:14px;height:14px;"><svg width="100%" height="100%" viewBox="0 0 14 14" style="display:block;overflow:visible"><circle cx="7" cy="7" r="6.400" fill="url(#gcls)" stroke="#1e8a1e" stroke-width=".8"/><path d="M9.900 5a3.400 3.400 0 1 0 0 4" fill="none" stroke="#fff" stroke-width="1.900"/></svg></div>
<div class="t" style="left:62.7px;top:420.00px;font-size:13px;letter-spacing:0.569px;color:#000;">OpaqueStr</div>
<svg style="position:absolute;left:22.8px;top:441.6px" width="8" height="10"><path d="M0.500 1L7 5L0.500 9Z" fill="#6e6e6e"/></svg>
<div style="left:35.5px;top:438.4px;width:24px;height:15px;"><svg width="100%" height="100%" viewBox="0 0 24 15" style="display:block;overflow:visible"><path d="M1 13v-11l1-1.200h4.200l1.500 1.700h6.300v3" fill="#e4d468" stroke="#a09020" stroke-width=".9"/><rect x="1" y="4.300" width="13.500" height="9.700" rx="1" fill="url(#gfold)" stroke="#a09020" stroke-width=".9"/><path d="M16 6.500c0-3.500 6.500-3.500 6.500 0" fill="none" stroke="#b4a48c" stroke-width="1.200"/><rect x="15" y="6.500" width="8.500" height="6" fill="#9a6a42" stroke="#5a3a20" stroke-width=".9"/><path d="M15 8.500h8.500" stroke="#5a3a20" stroke-width=".7"/><path d="M17.800 8.500v4M20.600 8.500v4" stroke="#c8a070" stroke-width=".7"/></svg></div>
<div class="t" style="left:62.7px;top:439.00px;font-size:13px;letter-spacing:0.357px;color:#000;">Ordered...</div>
<svg style="position:absolute;left:22.8px;top:461.4px" width="8" height="10"><path d="M0.500 1L7 5L0.500 9Z" fill="#6e6e6e"/></svg>
<div style="left:35.5px;top:458.2px;width:24px;height:15px;"><svg width="100%" height="100%" viewBox="0 0 24 15" style="display:block;overflow:visible"><path d="M1 13v-11l1-1.200h4.200l1.500 1.700h6.300v3" fill="#e4d468" stroke="#a09020" stroke-width=".9"/><rect x="1" y="4.300" width="13.500" height="9.700" rx="1" fill="url(#gfold)" stroke="#a09020" stroke-width=".9"/><path d="M16 6.500c0-3.500 6.500-3.500 6.500 0" fill="none" stroke="#b4a48c" stroke-width="1.200"/><rect x="15" y="6.500" width="8.500" height="6" fill="#9a6a42" stroke="#5a3a20" stroke-width=".9"/><path d="M15 8.500h8.500" stroke="#5a3a20" stroke-width=".7"/><path d="M17.800 8.500v4M20.600 8.500v4" stroke="#c8a070" stroke-width=".7"/></svg></div>
<div class="t" style="left:62.7px;top:459.00px;font-size:13px;letter-spacing:0.438px;color:#000;">pa...</div>
<svg style="position:absolute;left:22.8px;top:481.4px" width="8" height="10"><path d="M0.500 1L7 5L0.500 9Z" fill="#6e6e6e"/></svg>
<div style="left:35.5px;top:478.2px;width:24px;height:15px;"><svg width="100%" height="100%" viewBox="0 0 24 15" style="display:block;overflow:visible"><path d="M1 13v-11l1-1.200h4.200l1.500 1.700h6.300v3" fill="#e4d468" stroke="#a09020" stroke-width=".9"/><rect x="1" y="4.300" width="13.500" height="9.700" rx="1" fill="url(#gfold)" stroke="#a09020" stroke-width=".9"/><path d="M16 6.500c0-3.500 6.500-3.500 6.500 0" fill="none" stroke="#b4a48c" stroke-width="1.200"/><rect x="15" y="6.500" width="8.500" height="6" fill="#9a6a42" stroke="#5a3a20" stroke-width=".9"/><path d="M15 8.500h8.500" stroke="#5a3a20" stroke-width=".7"/><path d="M17.800 8.500v4M20.600 8.500v4" stroke="#c8a070" stroke-width=".7"/></svg></div>
<div class="t" style="left:62.7px;top:479.00px;font-size:13px;letter-spacing:0.277px;color:#000;">Pdu...</div>
<svg style="position:absolute;left:22px;top:502.9px" width="10" height="8"><path d="M1 0.500L9 0.500L5 7Z" fill="#6e6e6e"/></svg>
<div style="left:35.5px;top:498.4px;width:24px;height:15px;"><svg width="100%" height="100%" viewBox="0 0 24 15" style="display:block;overflow:visible"><path d="M1 13v-11l1-1.200h4.200l1.500 1.700h6.300v3" fill="#e4c860" stroke="#8a6a20" stroke-width=".9"/><path d="M1 14l3.300-7.700h11.200l-2.800 7.700z" fill="url(#gfold)" stroke="#8a6a20" stroke-width=".9"/><path d="M1.500 13.500l3.200-7" stroke="#6a4a10" stroke-width=".8"/><path d="M16 6.500c0-3.500 6.500-3.500 6.500 0" fill="none" stroke="#b4a48c" stroke-width="1.200"/><rect x="15" y="6.500" width="8.500" height="6" fill="#9a6a42" stroke="#5a3a20" stroke-width=".9"/><path d="M15 8.500h8.500" stroke="#5a3a20" stroke-width=".7"/><path d="M17.800 8.500v4M20.600 8.500v4" stroke="#c8a070" stroke-width=".7"/></svg></div>
<div class="t" style="left:62.7px;top:499.00px;font-size:13px;letter-spacing:0.259px;color:#000;">Pr...</div>
<svg style="position:absolute;left:38.8px;top:520.8px" width="8" height="10"><path d="M0.500 1L7 5L0.500 9Z" fill="#6e6e6e"/></svg>
<div style="left:50.5px;top:518.4px;width:14px;height:14px;"><svg width="100%" height="100%" viewBox="0 0 14 14" style="display:block;overflow:visible"><circle cx="7" cy="7" r="6.400" fill="url(#gcls)" stroke="#1e8a1e" stroke-width=".8"/><path d="M9.900 5a3.400 3.400 0 1 0 0 4" fill="none" stroke="#fff" stroke-width="1.900"/></svg></div>
<div class="t" style="left:78.7px;top:518.00px;font-size:13px;letter-spacing:0.002px;color:#000;">Priv</div>
<svg style="position:absolute;left:38.8px;top:538.4px" width="8" height="10"><path d="M0.500 1L7 5L0.500 9Z" fill="#6e6e6e"/></svg>
<div style="left:50.5px;top:536px;width:14px;height:14px;"><svg width="100%" height="100%" viewBox="0 0 14 14" style="display:block;overflow:visible"><circle cx="7" cy="7" r="6.400" fill="url(#gcls)" stroke="#1e8a1e" stroke-width=".8"/><path d="M9.900 5a3.400 3.400 0 1 0 0 4" fill="none" stroke="#fff" stroke-width="1.900"/></svg></div>
<div class="t" style="left:78.7px;top:536.00px;font-size:13px;letter-spacing:-0.225px;color:#000;">PrivAES</div>
<svg style="position:absolute;left:38.8px;top:556.4px" width="8" height="10"><path d="M0.500 1L7 5L0.500 9Z" fill="#6e6e6e"/></svg>
<div style="left:50.5px;top:554px;width:14px;height:14px;"><svg width="100%" height="100%" viewBox="0 0 14 14" style="display:block;overflow:visible"><circle cx="7" cy="7" r="6.400" fill="url(#gcls)" stroke="#1e8a1e" stroke-width=".8"/><path d="M9.900 5a3.400 3.400 0 1 0 0 4" fill="none" stroke="#fff" stroke-width="1.900"/></svg></div>
<div class="t" style="left:78.7px;top:554.00px;font-size:13px;letter-spacing:-0.318px;color:#000;">PrivAESW3DESKeyExt</div>
<svg style="position:absolute;left:38.8px;top:574.4px" width="8" height="10"><path d="M0.500 1L7 5L0.500 9Z" fill="#6e6e6e"/></svg>
<div style="left:50.5px;top:572px;width:14px;height:14px;"><svg width="100%" height="100%" viewBox="0 0 14 14" style="display:block;overflow:visible"><circle cx="7" cy="7" r="6.400" fill="url(#gcls)" stroke="#1e8a1e" stroke-width=".8"/><path d="M9.900 5a3.400 3.400 0 1 0 0 4" fill="none" stroke="#fff" stroke-width="1.900"/></svg></div>
<div class="t" style="left:78.7px;top:572.00px;font-size:13px;letter-spacing:-0.260px;color:#000;">PrivDES</div>
<svg style="position:absolute;left:38.8px;top:592.4px" width="8" height="10"><path d="M0.500 1L7 5L0.500 9Z" fill="#6e6e6e"/></svg>
<div style="left:50.5px;top:590px;width:14px;height:14px;"><svg width="100%" height="100%" viewBox="0 0 14 14" style="display:block;overflow:visible"><circle cx="7" cy="7" r="6.400" fill="url(#gcls)" stroke="#1e8a1e" stroke-width=".8"/><path d="M9.900 5a3.400 3.400 0 1 0 0 4" fill="none" stroke="#fff" stroke-width="1.900"/></svg></div>
<div class="t" style="left:78.7px;top:590.00px;font-size:13px;letter-spacing:0.316px;color:#000;">ProxyForwarder</div>
<svg style="position:absolute;left:22.8px;top:610.4px" width="8" height="10"><path d="M0.500 1L7 5L0.500 9Z" fill="#6e6e6e"/></svg>
<div style="left:34.5px;top:608px;width:14px;height:14px;"><svg width="100%" height="100%" viewBox="0 0 14 14" style="display:block;overflow:visible"><circle cx="7" cy="7" r="6.400" fill="url(#gcls)" stroke="#1e8a1e" stroke-width=".8"/><path d="M9.900 5a3.400 3.400 0 1 0 0 4" fill="none" stroke="#fff" stroke-width="1.900"/></svg></div>
<div class="t" style="left:62.7px;top:608.00px;font-size:13px;letter-spacing:0.427px;color:#000;">QueuedThreadPool</div>
<div style="left:35.500px;top:624px;width:24px;height:6px;overflow:hidden"><div style="left:0;top:2.500px;width:24px;height:15px"><svg width="100%" height="100%" viewBox="0 0 24 15" style="display:block;overflow:visible"><path d="M1 13v-11l1-1.200h4.200l1.500 1.700h6.300v3" fill="#e4d468" stroke="#a09020" stroke-width=".9"/><rect x="1" y="4.300" width="13.500" height="9.700" rx="1" fill="url(#gfold)" stroke="#a09020" stroke-width=".9"/><path d="M16 6.500c0-3.500 6.500-3.500 6.500 0" fill="none" stroke="#b4a48c" stroke-width="1.200"/><rect x="15" y="6.500" width="8.500" height="6" fill="#9a6a42" stroke="#5a3a20" stroke-width=".9"/><path d="M15 8.500h8.500" stroke="#5a3a20" stroke-width=".7"/><path d="M17.800 8.500v4M20.600 8.500v4" stroke="#c8a070" stroke-width=".7"/></svg></div></div>
<div style="left:340px;top:418px;width:14.5px;height:212px;background:linear-gradient(to right,#eceef1 0%,#fbfbfc 35%,#e4e6ea 100%);"></div>
<div style="left:340px;top:435px;width:14.5px;height:178px;border-radius:0 14.5px 14.5px 0 / 0 8px 8px 0;background:linear-gradient(to right,#64666b 0%,#9c9ea3 10%,#bfc1c6 28%,#d1d4da 55%,#d6d9df 100%);"></div>
<div style="left:340px;top:435px;width:14.5px;height:9px;border-radius:0 14.5px 0 0 / 0 8px 0 0;background:linear-gradient(rgba(40,42,46,.75),rgba(40,42,46,0));"></div>
<div style="left:340px;top:604px;width:14.5px;height:9px;border-radius:0 0 14.5px 0 / 0 0 8px 0;background:linear-gradient(rgba(40,42,46,0),rgba(40,42,46,.75));"></div>
<svg style="position:absolute;left:340px;top:418px" width="14.5" height="16"><path d="M3.75 12L7.25 5L10.75 12Z" fill="#3c3e42"/></svg>
<svg style="position:absolute;left:340px;top:613px" width="14.5" height="16"><path d="M3.75 5L7.25 12L10.75 5Z" fill="#3c3e42"/></svg>
<div style="left:339px;top:544.5px;width:15.1px;height:28.8px;border:1.200px solid #1c2c48;border-left:none;border-radius:0 15px 15px 0;background:linear-gradient(to right,#f0f4f9 0%,#b4c8dc 35%,#cfdcea 60%,#f6f9fc 100%);"></div>
<div style="left:3px;top:630px;width:337px;height:15px;background:linear-gradient(#eceef1 0%,#fbfbfc 35%,#e4e6ea 100%);"></div>
<div style="left:20px;top:630px;width:303px;height:15px;border-radius:0 0 8px 8px / 0 0 15px 15px;background:linear-gradient(#64666b 0%,#9c9ea3 10%,#bfc1c6 28%,#d1d4da 55%,#d6d9df 100%);"></div>
<div style="left:20px;top:630px;width:9px;height:15px;border-radius:0 0 0 8px / 0 0 0 15px;background:linear-gradient(to right,rgba(40,42,46,.75),rgba(40,42,46,0));"></div>
<div style="left:314px;top:630px;width:9px;height:15px;border-radius:0 0 8px 0 / 0 0 15px 0;background:linear-gradient(to right,rgba(40,42,46,0),rgba(40,42,46,.75));"></div>
<svg style="position:absolute;left:3px;top:630px" width="16" height="15"><path d="M12 4L5 7.5L12 11Z" fill="#3c3e42"/></svg>
<svg style="position:absolute;left:323px;top:630px" width="16" height="15"><path d="M5 4L12 7.5L5 11Z" fill="#3c3e42"/></svg>
<div style="left:20px;top:629px;width:216.5px;height:15.6px;border:1.200px solid #1c2c48;border-top:none;border-radius:0 0 15px 15px;background:linear-gradient(#f0f4f9 0%,#b4c8dc 35%,#cfdcea 60%,#f6f9fc 100%);"></div>
<div style="left:340px;top:630px;width:15px;height:15px;background:#d6d9df;"></div>
<div style="left:1px;top:648.4px;width:357px;height:34.6px;background:#d6d9df;border-top:2px solid #7e8085;border-left:2px solid #7e8085;border-bottom:2px solid #fff;border-right:2px solid #fff;"></div>
<div class="t" style="left:5.3px;top:658.00px;font-size:13px;letter-spacing:0.371px;color:#111;">Filter:</div>
<div style="left:49.2px;top:654.5px;width:281px;height:22px;background:#fff;border:1px solid #9a9ca2;border-top-color:#7e8187;"></div>
<div style="left:337px;top:657px;width:16px;height:16px;"><svg width="100%" height="100%" viewBox="0 0 16 16" style="display:block;overflow:visible"><path d="M3.500 0.800h8l3.700 3.700v10.700h-11.700z" fill="#cfe4fc" stroke="#4a92f0" stroke-width="1" stroke-linejoin="round"/><path d="M11.500 0.800v3.700h3.700" fill="#eaf3fe" stroke="#4a92f0" stroke-width=".8"/><path d="M5 12.500h8.500" stroke="#5aa0f4" stroke-width="1.600"/><path d="M4.500 5.500l-3 3l3 3" fill="none" stroke="#3a8af0" stroke-width="1.500"/><path d="M7.500 5.500l3 3l-3 3" fill="none" stroke="#3a8af0" stroke-width="1.500"/><path d="M5 8.500h4" stroke="#7ab4f8" stroke-width="1"/></svg></div>
<div style="left:1px;top:691.5px;width:357px;height:23px;border:1px solid #7e8085;background:linear-gradient(to right,#9c9c9c 0.00%,#b2b2b2 12.68%,#cfd0d3 25.92%,#d6d9df 28.17%);box-shadow:inset 1px 1px 0 rgba(255,255,255,.4);"></div>
<div style="left:3px;top:695.8px;width:16px;height:16px;"><svg width="100%" height="100%" viewBox="0 0 16 16" style="display:block;overflow:visible"><path d="M0.800 3.800l1-2.500h4.500l1.200 1.700h7.300v2.800h-14z" fill="#d8b82a" stroke="#7a6410" stroke-width=".8"/><rect x="0.700" y="4.800" width="14.600" height="9.500" rx="1" fill="#f0d840" stroke="#7a6410" stroke-width=".8"/><rect x="2.500" y="6.300" width="11" height="6.500" fill="#a08a20" opacity=".55"/><text x="8" y="12.300" font-family="Liberation Sans" font-weight="bold" font-size="7.500" text-anchor="middle" fill="#000">DT</text></svg></div>
<div class="t" style="left:22.6px;top:695.00px;font-size:13px;letter-spacing:0.379px;color:#000;">Data Type...</div>
<div style="left:104px;top:695px;width:16px;height:16px;"><svg width="100%" height="100%" viewBox="0 0 16 16" style="display:block;overflow:visible"><path d="M0.800 8l6.200-5.500v3.200h8.200v4.600h-8.200v3.200z" fill="#a4a4a4" stroke="#969696" stroke-width="1" stroke-linejoin="round"/></svg></div>
<div style="left:121.8px;top:695.5px;width:16px;height:16px;"><svg width="100%" height="100%" viewBox="0 0 16 16" style="display:block;overflow:visible"><path d="M5 6h5.400l-2.700 3.600z" fill="#9c9c9c"/></svg></div>
<div style="left:139.8px;top:695px;width:16px;height:16px;"><svg width="100%" height="100%" viewBox="0 0 16 16" style="display:block;overflow:visible"><path d="M15.200 8l-6.200-5.500v3.200h-8.200v4.600h8.200v3.200z" fill="#a4a4a4" stroke="#969696" stroke-width="1" stroke-linejoin="round"/></svg></div>
<div style="left:158px;top:695.5px;width:16px;height:16px;"><svg width="100%" height="100%" viewBox="0 0 16 16" style="display:block;overflow:visible"><path d="M5 6h5.400l-2.700 3.600z" fill="#9c9c9c"/></svg></div>
<div style="left:179.5px;top:694.5px;width:1px;height:17px;background:#a6a8ae;"></div>
<div style="left:180.5px;top:694.5px;width:1px;height:17px;background:#e6e8ec;"></div>
<div style="left:187.8px;top:695.5px;width:16px;height:16px;"><svg width="100%" height="100%" viewBox="0 0 16 16" style="display:block;overflow:visible"><path d="M2.500 1.500l2.200 2.200l-2.200 2.200l-2.200-2.200z" fill="#1a4ae0"/><path d="M3.500 4.500l2.500 2v6h3.500" fill="none" stroke="#f08a10" stroke-width="1.200"/><path d="M8 12.500l1.500-1.500v3z" fill="#f08a10"/><path d="M11.500 0.800l2.200 2.200l-2.200 2.200l-2.200-2.200z" fill="#000"/><path d="M11.500 8.300l2.400 2.400l-2.400 2.400l-2.400-2.400z" fill="#22b422"/></svg></div>
<div style="left:206.2px;top:695.5px;width:16px;height:16px;"><svg width="100%" height="100%" viewBox="0 0 16 16" style="display:block;overflow:visible"><path d="M5 6h5.400l-2.700 3.600z" fill="#111"/></svg></div>
<div style="left:227px;top:694.5px;width:1px;height:17px;background:#a6a8ae;"></div>
<div style="left:228px;top:694.5px;width:1px;height:17px;background:#e6e8ec;"></div>
<div style="left:233.6px;top:692.8px;width:21px;height:21px;background:#eeeff2;border-top:2px solid #8a8c91;border-left:2px solid #8a8c91;border-bottom:1.500px solid #fff;border-right:1.500px solid #fff;"></div>
<div style="left:236.5px;top:695.5px;width:16px;height:16px;"><svg width="100%" height="100%" viewBox="0 0 16 16" style="display:block;overflow:visible"><text x="8" y="11.500" font-family="Liberation Mono" font-weight="bold" font-size="11" text-anchor="middle" fill="#000" textLength="8" lengthAdjust="spacingAndGlyphs">[]</text><path d="M0.500 0.500l15 15" stroke="#e81818" stroke-width="2"/></svg></div>
<div style="left:256px;top:692.8px;width:21px;height:21px;background:#eeeff2;border-top:2px solid #8a8c91;border-left:2px solid #8a8c91;border-bottom:1.500px solid #fff;border-right:1.500px solid #fff;"></div>
<div style="left:258.8px;top:695.5px;width:16px;height:16px;"><svg width="100%" height="100%" viewBox="0 0 16 16" style="display:block;overflow:visible"><path d="M1 6.500c1-3 5-3.500 7-2l6.500-.5c1.500 0 1.500 2.500 0 2.500l-5 .3c1 .5 1 2 0 2.300c.8 .8 .3 2-.7 2c.5 1-.3 2-1.500 1.800c-3.500 .3-5.500-.5-6.300-2.400z" fill="#f0a030" stroke="#3a2008" stroke-width=".9"/><path d="M0.500 0.500l15 15" stroke="#e81818" stroke-width="2"/></svg></div>
<div style="left:283px;top:694.5px;width:1px;height:17px;background:#a6a8ae;"></div>
<div style="left:284px;top:694.5px;width:1px;height:17px;background:#e6e8ec;"></div>
<div style="left:292px;top:695px;width:16px;height:16px;"><svg width="100%" height="100%" viewBox="0 0 16 16" style="display:block;overflow:visible"><rect x="0.800" y="0.800" width="11.500" height="11.500" rx="1" fill="#f4f6fc" stroke="#5a7ab8" stroke-width="1"/><rect x="3.800" y="3.800" width="11.500" height="11.500" rx="1" fill="#fff" stroke="#5a7ab8" stroke-width="1"/><path d="M6.500 9.500h6" stroke="#2a4a9a" stroke-width="1.800"/></svg></div>
<div style="left:312px;top:694.5px;width:1px;height:17px;background:#a6a8ae;"></div>
<div style="left:313px;top:694.5px;width:1px;height:17px;background:#e6e8ec;"></div>
<div style="left:318.9px;top:701px;width:10.6px;height:5px;"><svg width="100%" height="100%" viewBox="0 0 10.600 5" style="display:block;overflow:visible"><path d="M0 0h10.600l-5.300 5z" fill="#000"/></svg></div>
<svg style="position:absolute;left:340.7px;top:697.5px" width="11" height="11"><path d="M1.200 1.200L9.8 9.8M9.8 1.200L1.200 9.8" stroke="#000" stroke-width="2.3" fill="none"/></svg>
<div style="left:2.5px;top:718px;width:352.8px;height:267.2px;background:#fff;border:1px solid #8e9197;"></div>
<svg style="position:absolute;left:6.8px;top:725.5px" width="10" height="8"><path d="M1 0.500L9 0.500L5 7Z" fill="#6e6e6e"/></svg>
<div style="left:20px;top:723.5px;width:24px;height:15px;"><svg width="100%" height="100%" viewBox="0 0 24 15" style="display:block;overflow:visible"><rect x="3.600" y="1.500" width="4" height="9.500" fill="#f08c1a"/><path d="M3.600 3.500h4M3.600 9h4" stroke="#d85a10" stroke-width=".8"/><rect x="12" y="0.300" width="4" height="10.700" fill="#3a4ae0"/><path d="M12 2.500h4M12 4.500h4" stroke="#ffe060" stroke-width=".8"/><rect x="16" y="1.300" width="4" height="9.700" fill="#2a9a5a"/><path d="M2.500 11l1-5M21.500 11l-1.500-5" stroke="#111" stroke-width=".8"/><path d="M0 11.500h24" stroke="#8a1a10" stroke-width="1.600"/><path d="M4.500 12v2.300M19 12v2.300" stroke="#8a1a10" stroke-width="1.600"/></svg></div>
<div class="t" style="left:45.6px;top:723.00px;font-size:13px;letter-spacing:0.518px;color:#000;">Data Types</div>
<svg style="position:absolute;left:23.8px;top:745.5px" width="8" height="10"><path d="M0.500 1L7 5L0.500 9Z" fill="#6e6e6e"/></svg>
<div style="left:37.5px;top:743px;width:12px;height:16px;"><svg width="100%" height="100%" viewBox="0 0 12 16" style="display:block;overflow:visible"><path d="M3.500 2.800l8-2v12.500l-8 2.500z" fill="#f08c1a"/><path d="M0.500 3.200l3-0.400v13l-3-0.800z" fill="#d86a10"/><path d="M0.500 3.200l7.500-2.700l3.500 0.300l-8 2z" fill="#fff" stroke="#d86a10" stroke-width=".5"/><path d="M5.500 6.300l1.500-1l1.500 .5l1.500-1M5.500 10.300l1.500-1l1.500 .5l1.500-1" fill="none" stroke="#ffe060" stroke-width="1.300"/><path d="M2 5v9" stroke="#ffd0a0" stroke-width=".6" stroke-dasharray=".8 .8"/></svg></div>
<div class="t" style="left:61.5px;top:744.00px;font-size:13px;letter-spacing:0.375px;color:#000;">BuiltInTypes</div>
<svg style="position:absolute;left:23.8px;top:766.5px" width="8" height="10"><path d="M0.500 1L7 5L0.500 9Z" fill="#6e6e6e"/></svg>
<div style="left:37.5px;top:764px;width:12px;height:16px;"><svg width="100%" height="100%" viewBox="0 0 12 16" style="display:block;overflow:visible"><path d="M3.500 2.800l8-2v12.500l-8 2.500z" fill="#f0406a"/><path d="M0.500 3.200l3-0.400v13l-3-0.800z" fill="#d82a50"/><path d="M0.500 3.200l7.500-2.700l3.500 0.300l-8 2z" fill="#fff" stroke="#d82a50" stroke-width=".5"/><path d="M5.500 6.300l1.500-1l1.500 .5l1.500-1M5.500 10.300l1.500-1l1.500 .5l1.500-1" fill="none" stroke="#ffe8a0" stroke-width="1.300"/><path d="M2 5v9" stroke="#ffd0a0" stroke-width=".6" stroke-dasharray=".8 .8"/></svg></div>
<div style="left:51.5px;top:767.5px;width:10px;height:10px;"><svg width="100%" height="100%" viewBox="0 0 10 10" style="display:block;overflow:visible"><circle cx="5" cy="5" r="4.400" fill="#2a5ad0" stroke="#1a3a8a" stroke-width=".7"/><path d="M2.300 5l2 2.200l3.300-4.200" fill="none" stroke="#fff" stroke-width="1.500"/></svg></div>
<div class="t" style="left:61.5px;top:765.00px;font-size:13px;letter-spacing:0.333px;color:#000;">lv_manager</div>
<svg style="position:absolute;left:23.8px;top:787.5px" width="8" height="10"><path d="M0.500 1L7 5L0.500 9Z" fill="#6e6e6e"/></svg>
<div style="left:37.5px;top:785px;width:12px;height:16px;"><svg width="100%" height="100%" viewBox="0 0 12 16" style="display:block;overflow:visible"><path d="M3.500 2.800l8-2v12.500l-8 2.500z" fill="#2a9a5a"/><path d="M0.500 3.200l3-0.400v13l-3-0.800z" fill="#1a7a44"/><path d="M0.500 3.200l7.500-2.700l3.500 0.300l-8 2z" fill="#fff" stroke="#1a7a44" stroke-width=".5"/><path d="M5.500 6.300l1.500-1l1.500 .5l1.500-1M5.500 10.300l1.500-1l1.500 .5l1.500-1" fill="none" stroke="#ffe060" stroke-width="1.300"/><path d="M2 5v9" stroke="#ffd0a0" stroke-width=".6" stroke-dasharray=".8 .8"/></svg></div>
<div class="t" style="left:61.5px;top:786.00px;font-size:13px;letter-spacing:0.327px;color:#000;">generic_clib</div>
<svg style="position:absolute;left:23.8px;top:808.5px" width="8" height="10"><path d="M0.500 1L7 5L0.500 9Z" fill="#6e6e6e"/></svg>
<div style="left:37.5px;top:806px;width:12px;height:16px;"><svg width="100%" height="100%" viewBox="0 0 12 16" style="display:block;overflow:visible"><path d="M3.500 2.800l8-2v12.500l-8 2.500z" fill="#2a9a5a"/><path d="M0.500 3.200l3-0.400v13l-3-0.800z" fill="#1a7a44"/><path d="M0.500 3.200l7.500-2.700l3.500 0.300l-8 2z" fill="#fff" stroke="#1a7a44" stroke-width=".5"/><path d="M5.500 6.300l1.500-1l1.500 .5l1.500-1M5.500 10.300l1.500-1l1.500 .5l1.500-1" fill="none" stroke="#ffe060" stroke-width="1.300"/><path d="M2 5v9" stroke="#ffd0a0" stroke-width=".6" stroke-dasharray=".8 .8"/></svg></div>
<div class="t" style="left:61.5px;top:807.00px;font-size:13px;letter-spacing:0.308px;color:#000;">generic_clib_64</div>
<div style="left:1px;top:987.3px;width:357px;height:34.7px;background:#d6d9df;border-top:2px solid #7e8085;border-left:2px solid #7e8085;border-bottom:2px solid #fff;border-right:2px solid #fff;"></div>
<div class="t" style="left:6.4px;top:997.00px;font-size:13px;letter-spacing:0.371px;color:#111;">Filter:</div>
<div style="left:50.3px;top:993.2px;width:279px;height:22.5px;background:#fff;border:1px solid #9a9ca2;border-top-color:#7e8187;"></div>
<div style="left:337px;top:996px;width:16px;height:16px;"><svg width="100%" height="100%" viewBox="0 0 16 16" style="display:block;overflow:visible"><path d="M3.500 0.800h8l3.700 3.700v10.700h-11.700z" fill="#cfe4fc" stroke="#4a92f0" stroke-width="1" stroke-linejoin="round"/><path d="M11.500 0.800v3.700h3.700" fill="#eaf3fe" stroke="#4a92f0" stroke-width=".8"/><path d="M5 12.500h8.500" stroke="#5aa0f4" stroke-width="1.600"/><path d="M4.500 5.500l-3 3l3 3" fill="none" stroke="#3a8af0" stroke-width="1.500"/><path d="M7.500 5.500l3 3l-3 3" fill="none" stroke="#3a8af0" stroke-width="1.500"/><path d="M5 8.500h4" stroke="#7ab4f8" stroke-width="1"/></svg></div>
<div style="left:366px;top:89px;width:515px;height:24px;border:1px solid #7e8085;background:linear-gradient(to right,#9c9c9c 0.00%,#b2b2b2 24.12%,#cfd0d3 49.32%,#d6d9df 53.61%);box-shadow:inset 1px 1px 0 rgba(255,255,255,.4);"></div>
<div style="left:370.5px;top:93.8px;width:16px;height:16px;"><svg width="100%" height="100%" viewBox="0 0 16 16" style="display:block;overflow:visible"><rect x="0.800" y="1.500" width="12.500" height="10.500" fill="#fff" stroke="#444" stroke-width=".9"/><rect x="0.800" y="1.500" width="3" height="10.500" fill="#fff"/><path d="M2.200 2.500v9" stroke="#111" stroke-width="1.300" stroke-dasharray="1.200 1.200"/><rect x="5" y="2.500" width="7.500" height="2.300" fill="#2a3a7a"/><rect x="5.500" y="2" width="5" height="1" fill="#7ae07a"/><path d="M5 6.500h7.500" stroke="#2a3a6a" stroke-width="1.300" stroke-dasharray="3 .8"/><rect x="5" y="8" width="7.500" height="1.500" fill="#8ae88a"/><path d="M5 10.800h7.500" stroke="#b0b0b0" stroke-width="1"/></svg></div>
<div class="t" style="left:388.7px;top:94.00px;font-size:13px;letter-spacing:0.339px;color:#000;">Listing:</div>
<div class="t" style="left:440.2px;top:94.00px;font-size:13px;letter-spacing:0.447px;color:#000;">lv_manager - (229</div>
<div class="t" style="left:557px;top:94.00px;font-size:13px;letter-spacing:0.521px;color:#000;">addresses ...</div>
<div style="left:643px;top:93px;width:16px;height:16px;"><svg width="100%" height="100%" viewBox="0 0 16 16" style="display:block;overflow:visible"><path d="M1 0.800h6.500l2.500 2.500v8.500h-9z" fill="#f6f6f8" stroke="#c8cacf" stroke-width=".8"/><path d="M6 4.500h6.500l2.500 2.500v8.500h-9z" fill="#f8f8fa" stroke="#c8cacf" stroke-width=".8"/><path d="M12.500 4.500v2.500h2.500" fill="none" stroke="#c8cacf" stroke-width=".7"/></svg></div>
<div style="left:665px;top:93px;width:16px;height:16px;"><svg width="100%" height="100%" viewBox="0 0 16 16" style="display:block;overflow:visible"><rect x="0.800" y="2.500" width="11" height="12.500" rx="1.200" fill="#d8984a" stroke="#a06a20" stroke-width=".9"/><rect x="3.500" y="0.800" width="5.500" height="3.500" rx="1" fill="#c8c8c8" stroke="#7a7a7a" stroke-width=".8"/><path d="M2.500 6v7M4 6v7" stroke="#e8b870" stroke-width=".7"/><path d="M6 5.500h6.500l3 3v7h-9.500z" fill="#dce8fc" stroke="#5a8ae0" stroke-width=".9"/><path d="M12.500 5.500v3h3" fill="#f4f8ff" stroke="#5a8ae0" stroke-width=".7"/></svg></div>
<div style="left:690px;top:93px;width:1px;height:17px;background:#a6a8ae;"></div>
<div style="left:691px;top:93px;width:1px;height:17px;background:#e6e8ec;"></div>
<div style="left:696.7px;top:90.7px;width:21.3px;height:21px;background:#f0f0f3;border-top:2px solid #8a8c91;border-left:2px solid #8a8c91;border-bottom:1.500px solid #fff;border-right:1.500px solid #fff;"></div>
<div style="left:699px;top:93.5px;width:16px;height:16px;"><svg width="100%" height="100%" viewBox="0 0 16 16" style="display:block;overflow:visible"><rect x="6" y="10" width="9" height="5.500" fill="#f4d868"/><path d="M6.500 12.500h8" stroke="#e8c040" stroke-width="1"/><path d="M1 0.800v12l3-2.800l2 4.800l2.200-1l-2.100-4.600h4.200z" fill="#fff" stroke="#000" stroke-width="1.100" stroke-linejoin="round"/></svg></div>
<div style="left:724px;top:93px;width:1px;height:17px;background:#a6a8ae;"></div>
<div style="left:725px;top:93px;width:1px;height:17px;background:#e6e8ec;"></div>
<div style="left:733px;top:93.3px;width:16px;height:16px;"><svg width="100%" height="100%" viewBox="0 0 16 16" style="display:block;overflow:visible"><rect x="0.800" y="0.800" width="14.400" height="9" fill="#fff" stroke="#222" stroke-width="1"/><path d="M0.800 3.800h14.400M0.800 6.800h14.400" stroke="#222" stroke-width="1"/><path d="M6 0.800v3M11 3.800v3M4.500 6.800v3M9.500 6.800v3" stroke="#222" stroke-width=".9"/><rect x="6" y="3.800" width="5" height="3" fill="#f0c020" stroke="#222" stroke-width=".6"/><path d="M8 10.500v2.500" stroke="#333" stroke-width="1.600"/><path d="M5 12.500h6l-3 3.300z" fill="#333"/></svg></div>
<div style="left:755px;top:93px;width:16px;height:16px;"><svg width="100%" height="100%" viewBox="0 0 16 16" style="display:block;overflow:visible"><rect x="0.600" y="1" width="5" height="14" fill="#eef4fe" stroke="#7aa4e8" stroke-width=".9"/><rect x="10.400" y="1" width="5" height="14" fill="#eef4fe" stroke="#7aa4e8" stroke-width=".9"/><path d="M1.800 3.500h2.500M1.800 6h2.500M1.800 12.500h2.500M11.600 3.500h2.500M11.600 10h2.500M11.600 12.500h2.500" stroke="#a8c4f0" stroke-width=".9"/><path d="M4.500 9.500l2.200 1.200l5-5.500" fill="none" stroke="#32a852" stroke-width="2.200" stroke-linecap="round"/></svg></div>
<div style="left:780px;top:93px;width:1px;height:17px;background:#a6a8ae;"></div>
<div style="left:781px;top:93px;width:1px;height:17px;background:#e6e8ec;"></div>
<div style="left:789px;top:92.8px;width:16px;height:16px;"><svg width="100%" height="100%" viewBox="0 0 16 16" style="display:block;overflow:visible"><rect x="0.600" y="4.300" width="14.800" height="10.500" rx="1.500" fill="#2c2c2c" stroke="#0a0a0a" stroke-width=".8"/><path d="M4.500 4.300l1-2.800h5l1 2.800z" fill="#d8d8d8" stroke="#0a0a0a" stroke-width=".8"/><rect x="1.500" y="5.300" width="13" height="1.500" fill="#555"/><circle cx="8" cy="10" r="3.800" fill="#6a6a6a" stroke="#111" stroke-width=".8"/><circle cx="8" cy="10" r="2.200" fill="#151515"/><circle cx="6.800" cy="8.800" r=".9" fill="#e8e8e8"/><rect x="12" y="5" width="2" height="1.200" fill="#999"/></svg></div>
<div style="left:813.7px;top:93px;width:1px;height:17px;background:#a6a8ae;"></div>
<div style="left:814.7px;top:93px;width:1px;height:17px;background:#e6e8ec;"></div>
<div style="left:823px;top:93px;width:16px;height:16px;"><svg width="100%" height="100%" viewBox="0 0 16 16" style="display:block;overflow:visible"><rect x="0.800" y="1.500" width="11" height="13" fill="#f8f8fa" stroke="#444" stroke-width=".9" stroke-dasharray="1.500 1"/><rect x="2.800" y="7" width="7" height="4.500" fill="#7aa8e8"/><path d="M2.800 10.500l2.500-2l2 1.500l2.500-2v3.500h-7z" fill="#4a78c8"/><path d="M3 4h6M3 5.500h4" stroke="#c8c8c8" stroke-width=".8"/><rect x="10.800" y="0.600" width="4.400" height="14.800" fill="#f4a030" stroke="#c07818" stroke-width=".8"/><path d="M12 2.500h2M12 4.500h1.200M12 6.500h2M12 8.500h1.200M12 10.500h2M12 12.500h1.200" stroke="#8a5210" stroke-width=".7"/></svg></div>
<div style="left:840.6px;top:93.5px;width:16px;height:16px;"><svg width="100%" height="100%" viewBox="0 0 16 16" style="display:block;overflow:visible"><path d="M5 6h5.400l-2.700 3.600z" fill="#111"/></svg></div>
<div style="left:857px;top:93px;width:1px;height:17px;background:#a6a8ae;"></div>
<div style="left:858px;top:93px;width:1px;height:17px;background:#e6e8ec;"></div>
<svg style="position:absolute;left:863.8px;top:95.7px" width="11" height="11"><path d="M1.200 1.200L9.8 9.8M9.8 1.200L1.200 9.8" stroke="#000" stroke-width="2.3" fill="none"/></svg>
<div style="left:368px;top:115px;width:116px;height:23px;background:#7b8ec5;border-left:1px solid #4a5a8a;border-right:1px solid #4a5a8a;border-top:1px solid #9aaad8;"></div>
<div class="t" style="left:384px;top:118.00px;font-size:13px;letter-spacing:0.001px;color:#fff;">*lv_manager</div>
<svg style="position:absolute;left:470px;top:121px" width="10" height="10"><path d="M1.200 1.200L8.8 8.8M8.8 1.200L1.200 8.8" stroke="#333" stroke-width="3.4" fill="none"/></svg>
<svg style="position:absolute;left:470px;top:121px" width="10" height="10"><path d="M1.200 1.200L8.8 8.8M8.8 1.200L1.200 8.8" stroke="#fff" stroke-width="1.8" fill="none"/></svg>
<div style="left:484px;top:136px;width:397px;height:1px;background:#fff;"></div>
<div style="left:366px;top:137px;width:515px;height:3px;background:linear-gradient(#7086c4,#7c90c8);"></div>
<div style="left:878px;top:140px;width:1px;height:785px;background:#8c8f96;"></div>
<div style="left:366px;top:924px;width:513px;height:1px;background:#8c8f96;"></div>
<div style="left:386px;top:141px;width:2px;height:768px;background:#bfc1c6;"></div>
<div style="left:388px;top:142px;width:443px;height:767px;background:#fff;border-top:1px solid #9a9da3;border-left:1px solid #9a9da3;"></div>
<div style="left:389px;top:143px;width:442px;height:159px;background:#b4ffb4;"></div>
<div style="left:389px;top:446px;width:442px;height:80px;background:#b4ffb4;"></div>
<div style="left:389px;top:526px;width:442px;height:32.8px;background:#c9fac9;"></div>
<div style="left:389px;top:143px;width:442px;height:765px;overflow:hidden">
<div class="m" style="left:16px;top:0.00px;color:#000">004f05fe</div>
<div class="m" style="left:79px;top:0.00px;color:#0000ff">48 8d 78 e8</div>
<div class="m" style="left:188px;top:0.00px;color:#000080">LEA</div>
<div class="m" style="left:268px;top:0.00px"><span style="color:#962096">this,</span><span style="color:#000">[</span><span style="color:#a8a020">RAX</span><span style="color:#000"> + </span><span style="color:#008a46">-0x18</span><span style="color:#000">]</span></div>
<div class="m" style="left:16px;top:16.00px;color:#000">004f0602</div>
<div class="m" style="left:79px;top:16.00px;color:#0000ff">48 81 ff</div>
<div class="m" style="left:188px;top:16.00px;color:#000080">CMP</div>
<div class="m" style="left:268px;top:16.00px"><span style="color:#962096">this,</span><span style="color:#ff00ff">std::basic_string&lt;ch</span></div>
<div class="m" style="left:79px;top:32.00px;color:#0000ff">00 48 8a 00</div>
<div class="m" style="left:16px;top:48.00px;color:#000">004f0609</div>
<div class="m" style="left:79px;top:48.00px;color:#0000ff">0f 84 e9</div>
<div class="m" style="left:188px;top:48.00px;color:#000080">JZ</div>
<div class="m" style="left:268px;top:48.00px"><span style="color:#000080">LAB_004efaf8</span></div>
<div class="m" style="left:79px;top:64.00px;color:#0000ff">f4 ff ff</div>
<div class="m" style="left:16px;top:80.00px;color:#000">004f060f</div>
<div class="m" style="left:79px;top:80.00px;color:#0000ff">48 8d b4</div>
<div class="m" style="left:188px;top:80.00px;color:#000080">LEA</div>
<div class="m" style="left:268px;top:80.00px"><span style="color:#962096">param_1=&gt;local_118,</span><span style="color:#000">[</span><span style="color:#a8a020">RSP</span><span style="color:#000"> +</span></div>
<div class="m" style="left:79px;top:96.00px;color:#0000ff">24 50 03</div>
<div class="m" style="left:79px;top:112.00px;color:#0000ff">00 00</div>
<div class="m" style="left:16px;top:128.00px;color:#000">004f0617</div>
<div class="m" style="left:79px;top:128.00px;color:#0000ff">e8 44 55</div>
<div class="m" style="left:188px;top:128.00px;color:#000080">CALL</div>
<div class="m" style="left:268px;top:128.00px"><span style="color:#0000ff">FUN_004e5b60</span></div>
<div class="m" style="left:79px;top:144.00px;color:#0000ff">ff ff</div>
<div class="m" style="left:16px;top:160.00px;color:#000">004f061c</div>
<div class="m" style="left:79px;top:160.00px;color:#0000ff">e9 d7 f4</div>
<div class="m" style="left:188px;top:160.00px;color:#000080">JMP</div>
<div class="m" style="left:268px;top:160.00px"><span style="color:#000080">LAB_004efaf8</span></div>
<div class="m" style="left:79px;top:176.00px;color:#0000ff">ff ff</div>
<div class="m" style="left:158px;top:208.00px;color:#000080">LAB_004f0621</div>
<div class="m" style="left:16px;top:224.00px;color:#000">004f0621</div>
<div class="m" style="left:79px;top:224.00px;color:#0000ff">4c 89 e6</div>
<div class="m" style="left:188px;top:224.00px;color:#000080">MOV</div>
<div class="m" style="left:268px;top:224.00px"><span style="color:#962096">param_1,</span><span style="color:#a8a020">R12</span></div>
<div class="m" style="left:16px;top:240.00px;color:#000">004f0624</div>
<div class="m" style="left:79px;top:240.00px;color:#0000ff">e8 37 55</div>
<div class="m" style="left:188px;top:240.00px;color:#000080">CALL</div>
<div class="m" style="left:268px;top:240.00px"><span style="color:#0000ff">FUN_004e5b60</span></div>
<div class="m" style="left:79px;top:256.00px;color:#0000ff">ff ff</div>
<div class="m" style="left:16px;top:272.00px;color:#000">004f0629</div>
<div class="m" style="left:79px;top:272.00px;color:#0000ff">e9 69 f3</div>
<div class="m" style="left:188px;top:272.00px;color:#000080">JMP</div>
<div class="m" style="left:268px;top:272.00px"><span style="color:#000080">LAB_004ef997</span></div>
<div class="m" style="left:79px;top:288.00px;color:#0000ff">ff ff</div>
<div class="m" style="left:158px;top:320.00px;color:#000080">LAB_004f062e</div>
<div class="m" style="left:16px;top:336.00px;color:#000">004f062e</div>
<div class="m" style="left:79px;top:336.00px;color:#0000ff">48 8d b4</div>
<div class="m" style="left:188px;top:336.00px;color:#000080">LEA</div>
<div class="m" style="left:268px;top:336.00px"><span style="color:#962096">param_1=&gt;local_118,</span><span style="color:#000">[</span><span style="color:#a8a020">RSP</span><span style="color:#000"> +</span></div>
<div class="m" style="left:79px;top:352.00px;color:#0000ff">24 50 03</div>
<div class="m" style="left:79px;top:368.00px;color:#0000ff">00 00</div>
<div class="m" style="left:16px;top:384.00px;color:#000">004f0636</div>
<div class="m" style="left:79px;top:384.00px;color:#0000ff">e8 25 55</div>
<div class="m" style="left:188px;top:384.00px;color:#000080">CALL</div>
<div class="m" style="left:268px;top:384.00px"><span style="color:#0000ff">FUN_004e5b60</span></div>
<div class="m" style="left:79px;top:400.00px;color:#0000ff">ff ff</div>
<div class="m" style="left:16px;top:416.00px;color:#000">004f063b</div>
<div class="m" style="left:79px;top:416.00px;color:#0000ff">e9 d1 f4</div>
<div class="m" style="left:188px;top:416.00px;color:#000080">JMP</div>
<div class="m" style="left:268px;top:416.00px"><span style="color:#000080">LAB_004efb11</span></div>
<div class="m" style="left:79px;top:432.00px;color:#0000ff">ff ff</div>
<div class="m" style="left:158px;top:464.00px;color:#000080">LAB_004f0640</div>
<div class="m" style="left:16px;top:480.00px;color:#000">004f0640</div>
<div class="m" style="left:79px;top:480.00px;color:#0000ff">48 8d b4</div>
<div class="m" style="left:188px;top:480.00px;color:#000080">LEA</div>
<div class="m" style="left:268px;top:480.00px"><span style="color:#962096">param_1=&gt;local_118,</span><span style="color:#000">[</span><span style="color:#a8a020">RSP</span><span style="color:#000"> +</span></div>
<div class="m" style="left:79px;top:496.00px;color:#0000ff">24 50 03</div>
<div class="m" style="left:79px;top:512.00px;color:#0000ff">00 00</div>
<div class="m" style="left:16px;top:528.00px;color:#000">004f0648</div>
<div class="m" style="left:79px;top:528.00px;color:#0000ff">e8 13 55</div>
<div class="m" style="left:188px;top:528.00px;color:#000080">CALL</div>
<div class="m" style="left:268px;top:528.00px"><span style="color:#0000ff">FUN_004e5b60</span></div>
<div class="m" style="left:79px;top:544.00px;color:#0000ff">ff ff</div>
<div class="m" style="left:16px;top:560.00px;color:#000">004f064d</div>
<div class="m" style="left:79px;top:560.00px;color:#0000ff">e9 d4 f2</div>
<div class="m" style="left:188px;top:560.00px;color:#000080">JMP</div>
<div class="m" style="left:268px;top:560.00px"><span style="color:#000080">LAB_004ef926</span></div>
<div class="m" style="left:79px;top:576.00px;color:#0000ff">ff ff</div>
<div class="m" style="left:158px;top:608.00px;color:#000080">LAB_004f0652</div>
<div class="m" style="left:16px;top:624.00px;color:#000">004f0652</div>
<div class="m" style="left:79px;top:624.00px;color:#0000ff">4c 89 e6</div>
<div class="m" style="left:188px;top:624.00px;color:#000080">MOV</div>
<div class="m" style="left:268px;top:624.00px"><span style="color:#962096">param_1,</span><span style="color:#a8a020">R12</span></div>
<div class="m" style="left:16px;top:640.00px;color:#000">004f0655</div>
<div class="m" style="left:79px;top:640.00px;color:#0000ff">e8 06 55</div>
<div class="m" style="left:188px;top:640.00px;color:#000080">CALL</div>
<div class="m" style="left:268px;top:640.00px"><span style="color:#0000ff">FUN_004e5b60</span></div>
<div class="m" style="left:79px;top:656.00px;color:#0000ff">ff ff</div>
<div class="m" style="left:16px;top:672.00px;color:#000">004f065a</div>
<div class="m" style="left:79px;top:672.00px;color:#0000ff">e9 10 f1</div>
<div class="m" style="left:188px;top:672.00px;color:#000080">JMP</div>
<div class="m" style="left:268px;top:672.00px"><span style="color:#000080">LAB_004ef76f</span></div>
<div class="m" style="left:79px;top:688.00px;color:#0000ff">ff ff</div>
<div class="m" style="left:158px;top:720.00px;color:#000080">LAB_004f065f</div>
<div class="m" style="left:16px;top:736.00px;color:#000">004f065f</div>
<div class="m" style="left:79px;top:736.00px;color:#0000ff">48 8d b4</div>
<div class="m" style="left:188px;top:736.00px;color:#000080">LEA</div>
<div class="m" style="left:268px;top:736.00px"><span style="color:#962096">param_1=&gt;local_118,</span><span style="color:#000">[</span><span style="color:#a8a020">RSP</span><span style="color:#000"> +</span></div>
<div class="m" style="left:79px;top:752.00px;color:#0000ff">24 50 03</div>
<div style="left:15px;top:384px;width:1px;height:14px;background:#f08080;"></div>
</div>
<svg style="position:absolute;left:366px;top:522px" width="22" height="22"><path d="M1 9.300h11" stroke="#000" stroke-width="1.300"/><path d="M15.700 9.300l-4.500-3.700v7.400z" fill="#000"/><path d="M16.800 3.500c0-2.500 2.700-2.500 2.700 0v14c0 2.500-2.700 2.500-2.700 0z" fill="#d6d9df" stroke="#f4f5f7" stroke-width=".9"/><path d="M16.800 3.500c0-2.500 2.700-2.500 2.700 0" fill="none" stroke="#a8aab0" stroke-width=".7"/></svg>
<div style="left:831px;top:143px;width:15px;height:766px;background:linear-gradient(to right,#eceef1 0%,#fbfbfc 35%,#e4e6ea 100%);"></div>
<div style="left:831px;top:160px;width:15px;height:732px;border-radius:0 15px 15px 0 / 0 8px 8px 0;background:linear-gradient(to right,#64666b 0%,#9c9ea3 10%,#bfc1c6 28%,#d1d4da 55%,#d6d9df 100%);"></div>
<div style="left:831px;top:160px;width:15px;height:9px;border-radius:0 15px 0 0 / 0 8px 0 0;background:linear-gradient(rgba(40,42,46,.75),rgba(40,42,46,0));"></div>
<div style="left:831px;top:883px;width:15px;height:9px;border-radius:0 0 15px 0 / 0 0 8px 0;background:linear-gradient(rgba(40,42,46,0),rgba(40,42,46,.75));"></div>
<svg style="position:absolute;left:831px;top:143px" width="15" height="16"><path d="M4 12L7.5 5L11 12Z" fill="#3c3e42"/></svg>
<svg style="position:absolute;left:831px;top:892px" width="15" height="16"><path d="M4 5L7.5 12L11 5Z" fill="#3c3e42"/></svg>
<div style="left:830px;top:391px;width:15.6px;height:29.7px;border:1.200px solid #1c2c48;border-left:none;border-radius:0 15px 15px 0;background:linear-gradient(to right,#f0f4f9 0%,#b4c8dc 35%,#cfdcea 60%,#f6f9fc 100%);"></div>
<div style="left:389px;top:909px;width:442px;height:15px;background:linear-gradient(#eceef1 0%,#fbfbfc 35%,#e4e6ea 100%);"></div>
<div style="left:406px;top:909px;width:408px;height:15px;border-radius:0 0 8px 8px / 0 0 15px 15px;background:linear-gradient(#64666b 0%,#9c9ea3 10%,#bfc1c6 28%,#d1d4da 55%,#d6d9df 100%);"></div>
<div style="left:406px;top:909px;width:9px;height:15px;border-radius:0 0 0 8px / 0 0 0 15px;background:linear-gradient(to right,rgba(40,42,46,.75),rgba(40,42,46,0));"></div>
<div style="left:805px;top:909px;width:9px;height:15px;border-radius:0 0 8px 0 / 0 0 15px 0;background:linear-gradient(to right,rgba(40,42,46,0),rgba(40,42,46,.75));"></div>
<svg style="position:absolute;left:389px;top:909px" width="16" height="15"><path d="M12 4L5 7.5L12 11Z" fill="#3c3e42"/></svg>
<svg style="position:absolute;left:814px;top:909px" width="16" height="15"><path d="M5 4L12 7.5L5 11Z" fill="#3c3e42"/></svg>
<div style="left:424px;top:908px;width:172px;height:15.6px;border:1.200px solid #1c2c48;border-top:none;border-radius:0 0 15px 15px;background:linear-gradient(#f0f4f9 0%,#b4c8dc 35%,#cfdcea 60%,#f6f9fc 100%);"></div>
<div style="left:831px;top:909px;width:15px;height:15px;background:#d6d9df;"></div>
<div style="left:846px;top:143px;width:17px;height:781px;background:#d6d9df;"></div>
<div style="left:853px;top:400px;width:9px;height:4px;background:#b4ffb4;"></div>
<div style="left:846.5px;top:402.3px;width:9.5px;height:4.5px;border:1px solid #fafafa;background:#c8c8cc;"></div>
<div style="left:846px;top:279.3px;width:10px;height:5px;border:1.200px solid #8a00ff;background:#b4a4d4;"></div>
<div style="left:846px;top:413.1px;width:10px;height:5px;border:1.200px solid #8a00ff;background:#b4a4d4;"></div>
<div style="left:846px;top:424px;width:10px;height:5px;border:1.200px solid #8a00ff;background:#b4a4d4;"></div>
<div style="left:863px;top:143px;width:15px;height:781px;background:#d6d9df;"></div>
<div style="left:863px;top:168px;width:13px;height:104.3px;background:#80ff80;"></div>
<div style="left:863px;top:272.3px;width:13px;height:449.4px;background:#cc99ff;"></div>
<div style="left:863px;top:721.7px;width:13px;height:150.2px;background:#80ff80;"></div>
<div style="left:863px;top:871.9px;width:13px;height:9.8px;background:#ff3366;"></div>
<div style="left:863px;top:881.7px;width:13px;height:1.1px;background:#80ff80;"></div>
<div style="left:863px;top:882.8px;width:13px;height:1.2px;background:#000;"></div>
<div style="left:863px;top:273.5px;width:13px;height:1px;background:#b8b8ff;"></div>
<div style="left:863px;top:328px;width:13px;height:1px;background:#b8b8ff;"></div>
<div style="left:863px;top:364.5px;width:13px;height:1px;background:#b8b8ff;"></div>
<div style="left:863px;top:374.3px;width:13px;height:1px;background:#b8b8ff;"></div>
<div style="left:863px;top:387.9px;width:13px;height:1px;background:#b8b8ff;"></div>
<div style="left:863px;top:392.8px;width:13px;height:1px;background:#b8b8ff;"></div>
<div style="left:863px;top:397px;width:13px;height:1px;background:#b8b8ff;"></div>
<div style="left:863px;top:403.9px;width:13px;height:1px;background:#b8b8ff;"></div>
<div style="left:863px;top:410.5px;width:13px;height:1px;background:#b8b8ff;"></div>
<div style="left:863px;top:411.3px;width:13px;height:1px;background:#b8b8ff;"></div>
<div style="left:863px;top:419.5px;width:13px;height:1px;background:#b8b8ff;"></div>
<div style="left:863px;top:423.5px;width:13px;height:1px;background:#b8b8ff;"></div>
<div style="left:863px;top:426.5px;width:13px;height:1px;background:#b8b8ff;"></div>
<div style="left:863px;top:429.1px;width:13px;height:1px;background:#b8b8ff;"></div>
<div style="left:863px;top:437.5px;width:13px;height:1px;background:#b8b8ff;"></div>
<div style="left:863px;top:438.3px;width:13px;height:1px;background:#b8b8ff;"></div>
<div style="left:863px;top:442.5px;width:13px;height:1px;background:#b8b8ff;"></div>
<div style="left:863px;top:448.5px;width:13px;height:1px;background:#b8b8ff;"></div>
<div style="left:863px;top:456.5px;width:13px;height:1px;background:#b8b8ff;"></div>
<div style="left:863px;top:459.5px;width:13px;height:1px;background:#b8b8ff;"></div>
<div style="left:863px;top:471.2px;width:13px;height:1px;background:#b8b8ff;"></div>
<div style="left:863px;top:514.5px;width:13px;height:1px;background:#b8b8ff;"></div>
<div style="left:863px;top:529px;width:13px;height:1px;background:#b8b8ff;"></div>
<div style="left:863px;top:544.2px;width:13px;height:1px;background:#b8b8ff;"></div>
<div style="left:863px;top:558px;width:13px;height:1px;background:#b8b8ff;"></div>
<div style="left:863px;top:562.5px;width:13px;height:1px;background:#b8b8ff;"></div>
<div style="left:863px;top:569px;width:13px;height:1px;background:#b8b8ff;"></div>
<div style="left:863px;top:571.5px;width:13px;height:1px;background:#b8b8ff;"></div>
<div style="left:863px;top:587px;width:13px;height:1px;background:#b8b8ff;"></div>
<div style="left:863px;top:591.5px;width:13px;height:1px;background:#b8b8ff;"></div>
<div style="left:863px;top:597.5px;width:13px;height:1px;background:#b8b8ff;"></div>
<div style="left:863px;top:605.5px;width:13px;height:1px;background:#b8b8ff;"></div>
<div style="left:863px;top:608.5px;width:13px;height:1px;background:#b8b8ff;"></div>
<div style="left:863px;top:611.5px;width:13px;height:1px;background:#b8b8ff;"></div>
<div style="left:863px;top:639.9px;width:13px;height:1px;background:#b8b8ff;"></div>
<div style="left:863px;top:645.5px;width:13px;height:1px;background:#b8b8ff;"></div>
<div style="left:863px;top:685.5px;width:13px;height:1px;background:#b8b8ff;"></div>
<div style="left:863px;top:695.3px;width:13px;height:1px;background:#b8b8ff;"></div>
<div style="left:863px;top:703.9px;width:13px;height:1px;background:#b8b8ff;"></div>
<div style="left:863px;top:709.5px;width:13px;height:1px;background:#b8b8ff;"></div>
<div style="left:863px;top:302.7px;width:13px;height:1px;background:#ff3060;"></div>
<div style="left:863px;top:325.7px;width:13px;height:1px;background:#ff3060;"></div>
<div style="left:863px;top:394.8px;width:13px;height:1px;background:#ff3060;"></div>
<div style="left:863px;top:483.5px;width:13px;height:1px;background:#ff3060;"></div>
<div style="left:863px;top:488px;width:13px;height:1px;background:#ff3060;"></div>
<div style="left:863px;top:490px;width:13px;height:1px;background:#ff3060;"></div>
<div style="left:863px;top:507px;width:13px;height:1px;background:#ff3060;"></div>
<div style="left:863px;top:531.7px;width:13px;height:1px;background:#ff3060;"></div>
<div style="left:863px;top:599.5px;width:13px;height:1px;background:#ff3060;"></div>
<div style="left:863px;top:634.7px;width:13px;height:1px;background:#ff3060;"></div>
<div style="left:863px;top:656.8px;width:13px;height:1px;background:#ff3060;"></div>
<div style="left:863px;top:657.7px;width:13px;height:1px;background:#ff3060;"></div>
<div style="left:863px;top:669.9px;width:13px;height:1px;background:#ff3060;"></div>
<div style="left:863px;top:675.1px;width:13px;height:1px;background:#ff3060;"></div>
<div style="left:863px;top:678px;width:13px;height:1px;background:#ff3060;"></div>
<div style="left:863px;top:688px;width:13px;height:1px;background:#ff3060;"></div>
<div style="left:863px;top:688.9px;width:13px;height:1px;background:#ff3060;"></div>
<div style="left:863px;top:712.6px;width:13px;height:1px;background:#ff3060;"></div>
<div style="left:863px;top:724.9px;width:13px;height:1px;background:#ff3060;"></div>
<div style="left:863px;top:726.9px;width:13px;height:1px;background:#ff3060;"></div>
<div style="left:863px;top:729.1px;width:13px;height:1px;background:#ff3060;"></div>
<div style="left:863px;top:748.9px;width:13px;height:1px;background:#ff3060;"></div>
<div style="left:863px;top:751.8px;width:13px;height:1px;background:#ff3060;"></div>
<div style="left:863px;top:760.7px;width:13px;height:1px;background:#ff3060;"></div>
<div style="left:863px;top:763.2px;width:13px;height:1px;background:#ff3060;"></div>
<div style="left:863px;top:765.7px;width:13px;height:1px;background:#ff3060;"></div>
<div style="left:863px;top:768.4px;width:13px;height:1px;background:#ff3060;"></div>
<div style="left:863px;top:852.8px;width:13px;height:1px;background:#ff3060;"></div>
<div style="left:863px;top:855.8px;width:13px;height:1px;background:#ff3060;"></div>
<div style="left:863px;top:863px;width:13px;height:1px;background:#ff3060;"></div>
<div style="left:887px;top:87px;width:959px;height:24px;border:1px solid #7e8085;background:linear-gradient(to right,#20209a 0.00%,#2c2c9e 11.53%,#6464b6 37.05%,#a8aad0 61.76%,#d6d9df 82.34%);box-shadow:inset 1px 1px 0 rgba(255,255,255,.95);"></div>
<div style="left:891.2px;top:91.8px;width:16px;height:16px;"><svg width="100%" height="100%" viewBox="0 0 16 16" style="display:block;overflow:visible"><path d="M8.700 2.600a4.200 4.200 0 1 0 0 6" fill="none" stroke="#2a9cff" stroke-width="2.700"/><path d="M14.800 6.300c-1.600-.9-2.800-.2-3.100 1.400l-1 5.800c-.2 1.400-1.200 1.800-2.200 1.200" fill="none" stroke="#ff22e6" stroke-width="1.600"/><path d="M9.800 9.300h4.200" stroke="#ff22e6" stroke-width="1.400"/></svg></div>
<div class="t" style="left:909.4px;top:92.00px;font-size:13px;letter-spacing:0.427px;color:#fff;">Decompile:</div>
<div class="t" style="left:982.7px;top:92.00px;font-size:13px;letter-spacing:0.432px;color:#fff;">HandleDiagRequest</div>
<div class="t" style="left:1110.6px;top:92.00px;font-size:13px;letter-spacing:0.970px;color:#fff;">-</div>
<div class="t" style="left:1122.7px;top:92.00px;font-size:13px;letter-spacing:0.426px;color:#fff;">(lv_manager)</div>
<div style="left:1678px;top:91px;width:16px;height:16px;"><svg width="100%" height="100%" viewBox="0 0 16 16" style="display:block;overflow:visible"><path d="M13.800 6.800A5.800 5.800 0 0 0 4.200 3.800" fill="none" stroke="#0c6a0c" stroke-width="3.600"/><path d="M13.800 6.800A5.800 5.800 0 0 0 4.200 3.800" fill="none" stroke="#28d428" stroke-width="2.300"/><path d="M0.800 3.200l6.200-.8l-3.600 6z" fill="#28d428" stroke="#0c6a0c" stroke-width=".7" stroke-linejoin="round"/><path d="M2.200 9.200A5.800 5.800 0 0 0 11.800 12.200" fill="none" stroke="#0c6a0c" stroke-width="3.600"/><path d="M2.200 9.200A5.800 5.800 0 0 0 11.800 12.200" fill="none" stroke="#28d428" stroke-width="2.300"/><path d="M15.200 12.800l-6.200 .8l3.600-6z" fill="#28d428" stroke="#0c6a0c" stroke-width=".7" stroke-linejoin="round"/></svg></div>
<div style="left:1703px;top:90.5px;width:1px;height:17px;background:#a6a8ae;"></div>
<div style="left:1704px;top:90.5px;width:1px;height:17px;background:#e6e8ec;"></div>
<div style="left:1712px;top:91px;width:16px;height:16px;"><svg width="100%" height="100%" viewBox="0 0 16 16" style="display:block;overflow:visible"><path d="M1 0.800h6.500l2.500 2.500v8.500h-9z" fill="#f6f6f8" stroke="#c8cacf" stroke-width=".8"/><path d="M6 4.500h6.500l2.500 2.500v8.500h-9z" fill="#f8f8fa" stroke="#c8cacf" stroke-width=".8"/><path d="M12.500 4.500v2.500h2.500" fill="none" stroke="#c8cacf" stroke-width=".7"/></svg></div>
<div style="left:1737px;top:90.5px;width:1px;height:17px;background:#a6a8ae;"></div>
<div style="left:1738px;top:90.5px;width:1px;height:17px;background:#e6e8ec;"></div>
<div style="left:1746.5px;top:90.5px;width:16px;height:16px;"><svg width="100%" height="100%" viewBox="0 0 16 16" style="display:block;overflow:visible"><rect x="1" y="2.500" width="12.500" height="12.500" fill="#c4dcfc" stroke="#4a8ae8" stroke-width="1"/><path d="M3 12.500h8" stroke="#e8f0fc" stroke-width="1"/><path d="M4 12.500l1-3.300l8-8l2.300 2.300l-8 8z" fill="#f4b440" stroke="#a86c10" stroke-width=".8" stroke-linejoin="round"/><path d="M4 12.500l1-3.300l2.300 2.300z" fill="#f8e4c4" stroke="#a86c10" stroke-width=".5"/><path d="M12 2.200l2.300 2.300" stroke="#e88080" stroke-width="1.200"/></svg></div>
<div style="left:1771.3px;top:90.5px;width:1px;height:17px;background:#a6a8ae;"></div>
<div style="left:1772.3px;top:90.5px;width:1px;height:17px;background:#e6e8ec;"></div>
<div style="left:1780.3px;top:91px;width:16px;height:16px;"><svg width="100%" height="100%" viewBox="0 0 16 16" style="display:block;overflow:visible"><rect x="0.600" y="4.300" width="14.800" height="10.500" rx="1.500" fill="#2c2c2c" stroke="#0a0a0a" stroke-width=".8"/><path d="M4.500 4.300l1-2.800h5l1 2.800z" fill="#d8d8d8" stroke="#0a0a0a" stroke-width=".8"/><rect x="1.500" y="5.300" width="13" height="1.500" fill="#555"/><circle cx="8" cy="10" r="3.800" fill="#6a6a6a" stroke="#111" stroke-width=".8"/><circle cx="8" cy="10" r="2.200" fill="#151515"/><circle cx="6.800" cy="8.800" r=".9" fill="#e8e8e8"/><rect x="12" y="5" width="2" height="1.200" fill="#999"/></svg></div>
<div style="left:1800px;top:90.5px;width:1px;height:17px;background:#a6a8ae;"></div>
<div style="left:1801px;top:90.5px;width:1px;height:17px;background:#e6e8ec;"></div>
<div style="left:1806.8px;top:97px;width:10.6px;height:5px;"><svg width="100%" height="100%" viewBox="0 0 10.600 5" style="display:block;overflow:visible"><path d="M0 0h10.600l-5.300 5z" fill="#000"/></svg></div>
<svg style="position:absolute;left:1828.7px;top:93.7px" width="11" height="11"><path d="M1.200 1.200L9.8 9.8M9.8 1.200L1.200 9.8" stroke="#000" stroke-width="2.3" fill="none"/></svg>
<div style="left:889px;top:113px;width:957px;height:783px;background:#fff;border:1px solid #9a9da3;"></div>
<div style="left:890px;top:114px;width:28.8px;height:511.6px;background:#b4ffb4;"></div>
<div style="left:919px;top:114px;width:909px;height:496.7px;background:#b4ffb4;"></div>
<div style="left:919px;top:610px;width:16px;height:15.6px;background:#b4ffb4;"></div>
<div style="left:918px;top:114px;width:1px;height:560px;background:#808080;"></div>
<div style="left:918px;top:690px;width:1px;height:205px;background:#808080;"></div>
<div style="left:890px;top:114px;width:938px;height:781px;overflow:hidden">
<div class="t" style="left:0px;top:0.00px;font-size:13px;letter-spacing:0.203px;color:#8a8a8a;">662</div>
<div class="m" style="left:157px;top:1.00px"><span style="color:#000">((</span><span style="color:#0033cc">basic_string</span><span style="color:#000"> *)</span><span style="color:#999900">local_298</span><span style="color:#000">,(</span><span style="color:#0033cc">char</span><span style="color:#000"> *)</span><span style="color:#999900">local_418</span><span style="color:#000">);</span></div>
<div class="t" style="left:0px;top:16.00px;font-size:13px;letter-spacing:0.203px;color:#8a8a8a;">663</div>
<div class="m" style="left:171px;top:17.00px"><span style="color:#9600ff">/* try { // try from 004f0554 to 004f0558 has its CatchHandler @ 004f0b1a */</span></div>
<div class="t" style="left:0px;top:32.00px;font-size:13px;letter-spacing:0.203px;color:#8a8a8a;">664</div>
<div class="m" style="left:87px;top:33.00px"><span style="color:#0000ff">swap</span><span style="color:#000">((</span><span style="color:#0033cc">basic_string</span><span style="color:#000"> *)&amp;</span><span style="color:#999900">local_188</span><span style="color:#000">);</span></div>
<div class="t" style="left:0px;top:48.00px;font-size:13px;letter-spacing:0.203px;color:#8a8a8a;">665</div>
<div class="m" style="left:87px;top:49.00px"><span style="color:#0001e6">if</span><span style="color:#000"> (</span><span style="color:#999900">local_298</span><span style="color:#000">[</span><span style="color:#008e00">0</span><span style="color:#000">] != </span><span style="color:#008e00">0x8a4818</span><span style="color:#000">) {</span></div>
<div class="t" style="left:0px;top:64.00px;font-size:13px;letter-spacing:0.203px;color:#8a8a8a;">666</div>
<div class="m" style="left:101px;top:65.00px"><span style="color:#0000ff">FUN_004e5b60</span><span style="color:#000">();</span></div>
<div class="t" style="left:0px;top:80.00px;font-size:13px;letter-spacing:0.203px;color:#8a8a8a;">667</div>
<div class="m" style="left:87px;top:81.00px"><span style="color:#000">}</span></div>
<div class="t" style="left:0px;top:96.00px;font-size:13px;letter-spacing:0.203px;color:#8a8a8a;">668</div>
<div class="m" style="left:171px;top:97.00px"><span style="color:#9600ff">/* try { // try from 004f057a to 004f0597 has its CatchHandler @ 004f0b6a */</span></div>
<div class="t" style="left:0px;top:112.00px;font-size:13px;letter-spacing:0.203px;color:#8a8a8a;">669</div>
<div class="m" style="left:87px;top:113.00px"><span style="color:#0000ff">_unlink</span><span style="color:#000">(</span><span style="color:#999900">local_188</span><span style="color:#000">);</span></div>
<div class="t" style="left:0px;top:128.00px;font-size:13px;letter-spacing:0.203px;color:#8a8a8a;">670</div>
<div class="m" style="left:87px;top:129.00px"><span style="color:#0000ff">rmdir</span><span style="color:#000">(</span><span style="color:#999900">local_418</span><span style="color:#000">[</span><span style="color:#008e00">0</span><span style="color:#000">]);</span></div>
<div class="t" style="left:0px;top:144.00px;font-size:13px;letter-spacing:0.203px;color:#8a8a8a;">671</div>
<div class="m" style="left:87px;top:145.00px"><span style="color:#0000ff">Value</span><span style="color:#000">((</span><span style="color:#0033cc">Value</span><span style="color:#000"> *)</span><span style="color:#999900">local_118</span><span style="color:#000">,</span><span style="color:#008e00">0</span><span style="color:#000">);</span></div>
<div class="t" style="left:0px;top:160.00px;font-size:13px;letter-spacing:0.203px;color:#8a8a8a;">672</div>
<div class="m" style="left:171px;top:161.00px"><span style="color:#9600ff">/* try { // try from 004f05a2 to 004f05b6 has its CatchHandler @ 004f0b6f */</span></div>
<div class="t" style="left:0px;top:176.00px;font-size:13px;letter-spacing:0.203px;color:#8a8a8a;">673</div>
<div class="m" style="left:87px;top:177.00px"><span style="color:#999900">this_00</span><span style="color:#000"> = (</span><span style="color:#0033cc">Value</span><span style="color:#000"> *)</span><span style="color:#0000ff">operator[]</span><span style="color:#000">(</span><span style="color:#9b009b">param_3</span><span style="color:#000">,</span><span style="color:#008e00">"ResultCode"</span><span style="color:#000">);</span></div>
<div class="t" style="left:0px;top:192.00px;font-size:13px;letter-spacing:0.203px;color:#8a8a8a;">674</div>
<div class="m" style="left:87px;top:193.00px"><span style="color:#0000ff">operator=</span><span style="color:#000">(</span><span style="color:#999900">this_00</span><span style="color:#000">,(</span><span style="color:#0033cc">Value</span><span style="color:#000"> *)</span><span style="color:#999900">local_118</span><span style="color:#000">);</span></div>
<div class="t" style="left:0px;top:208.00px;font-size:13px;letter-spacing:0.203px;color:#8a8a8a;">675</div>
<div class="m" style="left:87px;top:209.00px"><span style="color:#0000ff">~Value</span><span style="color:#000">((</span><span style="color:#0033cc">Value</span><span style="color:#000"> *)</span><span style="color:#999900">local_118</span><span style="color:#000">);</span></div>
<div class="t" style="left:0px;top:224.00px;font-size:13px;letter-spacing:0.203px;color:#8a8a8a;">676</div>
<div class="m" style="left:87px;top:225.00px"><span style="color:#0001e6">if</span><span style="color:#000"> (</span><span style="color:#999900">local_188</span><span style="color:#000"> + </span><span style="color:#008e00">-0x18</span><span style="color:#000"> != </span><span style="color:#009999">_S_empty_rep_storage</span><span style="color:#000">) {</span></div>
<div class="t" style="left:0px;top:240.00px;font-size:13px;letter-spacing:0.203px;color:#8a8a8a;">677</div>
<div class="m" style="left:101px;top:241.00px"><span style="color:#0000ff">FUN_004e5b60</span><span style="color:#000">(</span><span style="color:#999900">local_188</span><span style="color:#000"> + </span><span style="color:#008e00">-0x18</span><span style="color:#000">,</span><span style="color:#999900">local_118</span><span style="color:#000">);</span></div>
<div class="t" style="left:0px;top:256.00px;font-size:13px;letter-spacing:0.203px;color:#8a8a8a;">678</div>
<div class="m" style="left:87px;top:257.00px"><span style="color:#000">}</span></div>
<div class="t" style="left:0px;top:272.00px;font-size:13px;letter-spacing:0.203px;color:#8a8a8a;">679</div>
<div class="m" style="left:87px;top:273.00px"><span style="color:#0001e6">if</span><span style="color:#000"> ((</span><span style="color:#0033cc">undefined1</span><span style="color:#000"> *)(</span><span style="color:#999900">local_1e8</span><span style="color:#000"> + </span><span style="color:#008e00">-0x18</span><span style="color:#000">) != </span><span style="color:#009999">_S_empty_rep_storage</span><span style="color:#000">) {</span></div>
<div class="t" style="left:0px;top:288.00px;font-size:13px;letter-spacing:0.203px;color:#8a8a8a;">680</div>
<div class="m" style="left:101px;top:289.00px"><span style="color:#0000ff">FUN_004e5b60</span><span style="color:#000">((</span><span style="color:#0033cc">undefined1</span><span style="color:#000"> *)(</span><span style="color:#999900">local_1e8</span><span style="color:#000"> + </span><span style="color:#008e00">-0x18</span><span style="color:#000">),</span><span style="color:#999900">local_118</span><span style="color:#000">);</span></div>
<div class="t" style="left:0px;top:304.00px;font-size:13px;letter-spacing:0.203px;color:#8a8a8a;">681</div>
<div class="m" style="left:87px;top:305.00px"><span style="color:#000">}</span></div>
<div class="t" style="left:0px;top:320.00px;font-size:13px;letter-spacing:0.203px;color:#8a8a8a;">682</div>
<div class="m" style="left:87px;top:321.00px"><span style="color:#0001e6">if</span><span style="color:#000"> (</span><span style="color:#999900">local_208</span><span style="color:#000">[</span><span style="color:#008e00">0</span><span style="color:#000">] + </span><span style="color:#008e00">-0x18</span><span style="color:#000"> != </span><span style="color:#009999">_S_empty_rep_storage</span><span style="color:#000">) {</span></div>
<div class="t" style="left:0px;top:336.00px;font-size:13px;letter-spacing:0.203px;color:#8a8a8a;">683</div>
<div class="m" style="left:101px;top:337.00px"><span style="color:#0000ff">FUN_004e5b60</span><span style="color:#000">(</span><span style="color:#999900">local_208</span><span style="color:#000">[</span><span style="color:#008e00">0</span><span style="color:#000">] + </span><span style="color:#008e00">-0x18</span><span style="color:#000">,</span><span style="color:#999900">local_118</span><span style="color:#000">);</span></div>
<div class="t" style="left:0px;top:352.00px;font-size:13px;letter-spacing:0.203px;color:#8a8a8a;">684</div>
<div class="m" style="left:87px;top:353.00px"><span style="color:#000">}</span></div>
<div class="t" style="left:0px;top:368.00px;font-size:13px;letter-spacing:0.203px;color:#8a8a8a;">685</div>
<div class="m" style="left:73px;top:369.00px"><span style="color:#000">}</span></div>
<div class="t" style="left:0px;top:384.00px;font-size:13px;letter-spacing:0.203px;color:#8a8a8a;">686</div>
<div class="m" style="left:73px;top:385.00px"><span style="color:#0001e6">else</span><span style="color:#000"> {</span></div>
<div class="t" style="left:0px;top:400.00px;font-size:13px;letter-spacing:0.203px;color:#8a8a8a;">687</div>
<div class="m" style="left:87px;top:401.00px"><span style="color:#999900">uVar16</span><span style="color:#000"> = </span><span style="color:#008e00">0xffffffff</span><span style="color:#000">;</span></div>
<div class="t" style="left:0px;top:416.00px;font-size:13px;letter-spacing:0.203px;color:#8a8a8a;">688</div>
<div class="m" style="left:73px;top:417.00px"><span style="color:#000">}</span></div>
<div class="t" style="left:0px;top:432.00px;font-size:13px;letter-spacing:0.203px;color:#8a8a8a;">689</div>
<div class="m" style="left:59px;top:433.00px"><span style="color:#000">}</span></div>
<div class="t" style="left:0px;top:448.00px;font-size:13px;letter-spacing:0.203px;color:#8a8a8a;">690</div>
<div class="m" style="left:59px;top:449.00px"><span style="color:#0001e6">if</span><span style="color:#000"> (</span><span style="color:#999900">local_338</span><span style="color:#000">[</span><span style="color:#008e00">0</span><span style="color:#000">] + </span><span style="color:#008e00">-0x18</span><span style="color:#000"> != </span><span style="color:#009999">_S_empty_rep_storage</span><span style="color:#000">) {</span></div>
<div class="t" style="left:0px;top:464.00px;font-size:13px;letter-spacing:0.203px;color:#8a8a8a;">691</div>
<div class="m" style="left:73px;top:465.00px"><span style="color:#0000ff">FUN_004e5b60</span><span style="color:#000">(</span><span style="color:#999900">local_338</span><span style="color:#000">[</span><span style="color:#008e00">0</span><span style="color:#000">] + </span><span style="color:#008e00">-0x18</span><span style="color:#000">,</span><span style="color:#999900">local_118</span><span style="color:#000">);</span></div>
<div class="t" style="left:0px;top:480.00px;font-size:13px;letter-spacing:0.203px;color:#8a8a8a;">692</div>
<div class="m" style="left:59px;top:481.00px"><span style="color:#000">}</span></div>
<div class="t" style="left:0px;top:496.00px;font-size:13px;letter-spacing:0.203px;color:#8a8a8a;">693</div>
<div style="left:45px;top:496px;width:7px;height:15.6px;background:#e8f04c;"></div>
<div style="left:52px;top:496px;width:2px;height:15.6px;background:#e81010;"></div>
<div class="m" style="left:45px;top:497.00px"><span style="color:#000">}</span></div>
<div class="t" style="left:0px;top:512.00px;font-size:13px;letter-spacing:0.203px;color:#8a8a8a;">694</div>
<div class="m" style="left:31px;top:513.00px"><span style="color:#000">LAB_004efb11:</span></div>
<div class="t" style="left:0px;top:528.00px;font-size:13px;letter-spacing:0.203px;color:#8a8a8a;">695</div>
<div class="m" style="left:45px;top:529.00px"><span style="color:#0000ff">_M_clear</span><span style="color:#000">((</span></div>
<div class="t" style="left:0px;top:544.00px;font-size:13px;letter-spacing:0.203px;color:#8a8a8a;">696</div>
<div class="m" style="left:115px;top:545.00px"><span style="color:#0033cc">_List_base&lt;std--basic_string&lt;char,std--char_traits&lt;char&gt;,std--allocator&lt;char&gt;&gt;,std--allo</span></div>
<div class="m" style="left:115px;top:561.00px"><span style="color:#0033cc">cator&lt;std--basic_string&lt;char,std--char_traits&lt;char&gt;,std--allocator&lt;char&gt;&gt;&gt;&gt;</span></div>
<div class="t" style="left:0px;top:576.00px;font-size:13px;letter-spacing:0.203px;color:#8a8a8a;">697</div>
<div class="m" style="left:115px;top:577.00px"><span style="color:#000">*)&amp;</span><span style="color:#999900">local_288</span><span style="color:#000">);</span></div>
<div class="t" style="left:0px;top:592.00px;font-size:13px;letter-spacing:0.203px;color:#8a8a8a;">698</div>
<div class="m" style="left:45px;top:593.00px"><span style="color:#0001e6">if</span><span style="color:#000"> ((</span><span style="color:#0033cc">undefined1</span><span style="color:#000"> *)(</span><span style="color:#999900">local_388</span><span style="color:#000">[</span><span style="color:#008e00">0</span><span style="color:#000">] + </span><span style="color:#008e00">-0x18</span><span style="color:#000">) != </span><span style="color:#009999">_S_empty_rep_storage</span><span style="color:#000">) {</span></div>
<div class="t" style="left:0px;top:608.00px;font-size:13px;letter-spacing:0.203px;color:#8a8a8a;">699</div>
<div class="m" style="left:59px;top:609.00px"><span style="color:#0000ff">FUN_004e5b60</span><span style="color:#000">((</span><span style="color:#0033cc">undefined1</span><span style="color:#000"> *)(</span><span style="color:#999900">local_388</span><span style="color:#000">[</span><span style="color:#008e00">0</span><span style="color:#000">] + </span><span style="color:#008e00">-0x18</span><span style="color:#000">),</span><span style="color:#999900">local_118</span><span style="color:#000">);</span></div>
<div class="t" style="left:0px;top:624.00px;font-size:13px;letter-spacing:0.203px;color:#8a8a8a;">700</div>
<div class="m" style="left:45px;top:625.00px"><span style="color:#000">}</span></div>
<div class="t" style="left:0px;top:640.00px;font-size:13px;letter-spacing:0.203px;color:#8a8a8a;">701</div>
<div class="m" style="left:45px;top:641.00px"><span style="color:#0001e6">if</span><span style="color:#000"> ((</span><span style="color:#0033cc">undefined1</span><span style="color:#000"> *)(</span><span style="color:#999900">local_398</span><span style="color:#000">[</span><span style="color:#008e00">0</span><span style="color:#000">] + </span><span style="color:#008e00">-0x18</span><span style="color:#000">) != </span><span style="color:#009999">_S_empty_rep_storage</span><span style="color:#000">) {</span></div>
<div class="t" style="left:0px;top:656.00px;font-size:13px;letter-spacing:0.203px;color:#8a8a8a;">702</div>
<div class="m" style="left:59px;top:657.00px"><span style="color:#0000ff">FUN_004e5b60</span><span style="color:#000">((</span><span style="color:#0033cc">undefined1</span><span style="color:#000"> *)(</span><span style="color:#999900">local_398</span><span style="color:#000">[</span><span style="color:#008e00">0</span><span style="color:#000">] + </span><span style="color:#008e00">-0x18</span><span style="color:#000">),</span><span style="color:#999900">local_118</span><span style="color:#000">);</span></div>
<div class="t" style="left:0px;top:672.00px;font-size:13px;letter-spacing:0.203px;color:#8a8a8a;">703</div>
<div class="m" style="left:45px;top:673.00px"><span style="color:#000">}</span></div>
<div class="t" style="left:0px;top:688.00px;font-size:13px;letter-spacing:0.203px;color:#8a8a8a;">704</div>
<div class="m" style="left:45px;top:689.00px"><span style="color:#0001e6">if</span><span style="color:#000"> (</span><span style="color:#999900">local_3a8</span><span style="color:#000">[</span><span style="color:#008e00">0</span><span style="color:#000">] + </span><span style="color:#008e00">-0x18</span><span style="color:#000"> != </span><span style="color:#009999">_S_empty_rep_storage</span><span style="color:#000">) {</span></div>
<div class="t" style="left:0px;top:704.00px;font-size:13px;letter-spacing:0.203px;color:#8a8a8a;">705</div>
<div class="m" style="left:59px;top:705.00px"><span style="color:#0000ff">FUN_004e5b60</span><span style="color:#000">(</span><span style="color:#999900">local_3a8</span><span style="color:#000">[</span><span style="color:#008e00">0</span><span style="color:#000">] + </span><span style="color:#008e00">-0x18</span><span style="color:#000">,</span><span style="color:#999900">local_118</span><span style="color:#000">);</span></div>
<div class="t" style="left:0px;top:720.00px;font-size:13px;letter-spacing:0.203px;color:#8a8a8a;">706</div>
<div class="m" style="left:45px;top:721.00px"><span style="color:#000">}</span></div>
<div class="t" style="left:0px;top:736.00px;font-size:13px;letter-spacing:0.203px;color:#8a8a8a;">707</div>
<div class="m" style="left:45px;top:737.00px"><span style="color:#0001e6">if</span><span style="color:#000"> ((</span><span style="color:#0033cc">undefined1</span><span style="color:#000"> *)(</span><span style="color:#999900">local_3b8</span><span style="color:#000">[</span><span style="color:#008e00">0</span><span style="color:#000">] + </span><span style="color:#008e00">-0x18</span><span style="color:#000">) != </span><span style="color:#009999">_S_empty_rep_storage</span><span style="color:#000">) {</span></div>
<div class="t" style="left:0px;top:752.00px;font-size:13px;letter-spacing:0.203px;color:#8a8a8a;">708</div>
<div class="m" style="left:59px;top:753.00px"><span style="color:#0000ff">FUN_004e5b60</span><span style="color:#000">((</span><span style="color:#0033cc">undefined1</span><span style="color:#000"> *)(</span><span style="color:#999900">local_3b8</span><span style="color:#000">[</span><span style="color:#008e00">0</span><span style="color:#000">] + </span><span style="color:#008e00">-0x18</span><span style="color:#000">),</span><span style="color:#999900">local_118</span><span style="color:#000">);</span></div>
<div class="t" style="left:0px;top:768.00px;font-size:13px;letter-spacing:0.203px;color:#8a8a8a;">709</div>
<div class="m" style="left:45px;top:769.00px"><span style="color:#000">}</span></div>
</div>
<div style="left:1828px;top:114px;width:15.5px;height:781px;background:linear-gradient(to right,#eceef1 0%,#fbfbfc 35%,#e4e6ea 100%);"></div>
<div style="left:1828px;top:131px;width:15.5px;height:747px;border-radius:0 15.5px 15.5px 0 / 0 8px 8px 0;background:linear-gradient(to right,#64666b 0%,#9c9ea3 10%,#bfc1c6 28%,#d1d4da 55%,#d6d9df 100%);"></div>
<div style="left:1828px;top:131px;width:15.5px;height:9px;border-radius:0 15.5px 0 0 / 0 8px 0 0;background:linear-gradient(rgba(40,42,46,.75),rgba(40,42,46,0));"></div>
<div style="left:1828px;top:869px;width:15.5px;height:9px;border-radius:0 0 15.5px 0 / 0 0 8px 0;background:linear-gradient(rgba(40,42,46,0),rgba(40,42,46,.75));"></div>
<svg style="position:absolute;left:1828px;top:114px" width="15.5" height="16"><path d="M4.25 12L7.75 5L11.25 12Z" fill="#3c3e42"/></svg>
<svg style="position:absolute;left:1828px;top:878px" width="15.5" height="16"><path d="M4.25 5L7.75 12L11.25 5Z" fill="#3c3e42"/></svg>
<div style="left:1827px;top:805.6px;width:16.1px;height:48.1px;border:1.200px solid #1c2c48;border-left:none;border-radius:0 15px 15px 0;background:linear-gradient(to right,#f0f4f9 0%,#b4c8dc 35%,#cfdcea 60%,#f6f9fc 100%);"></div>
<div style="left:887px;top:899px;width:959px;height:1px;background:#15202e;"></div>
<div style="left:887px;top:900px;width:959px;height:3px;background:linear-gradient(#c6d9ee,#9db6d4);"></div>
<div style="left:897px;top:903px;width:220px;height:23px;border:1px solid #1c2a40;border-top:none;border-radius:0 0 6px 6px;background:linear-gradient(#b4c8de 0%,#c3d4e6 40%,#f0f4f9 100%);"></div>
<div style="left:905px;top:905.5px;width:16px;height:16px;"><svg width="100%" height="100%" viewBox="0 0 16 16" style="display:block;overflow:visible"><path d="M8.700 2.600a4.200 4.200 0 1 0 0 6" fill="none" stroke="#2a9cff" stroke-width="2.700"/><path d="M14.800 6.300c-1.600-.9-2.800-.2-3.100 1.400l-1 5.800c-.2 1.400-1.200 1.800-2.200 1.200" fill="none" stroke="#ff22e6" stroke-width="1.600"/><path d="M9.800 9.300h4.200" stroke="#ff22e6" stroke-width="1.400"/></svg></div>
<div class="t" style="left:925.4px;top:907.00px;font-size:13px;letter-spacing:0.340px;color:#111;">Decompile: HandleDiagR...</div>
<svg style="position:absolute;left:1099.4px;top:910px" width="7" height="7"><path d="M1 1L6 6M6 1L1 6" stroke="#1a1a1a" stroke-width="1.250" fill="none"/></svg>
<div style="left:1118px;top:903px;width:137px;height:23px;border:1px solid #1c2a40;border-radius:0 0 6px 6px;background:linear-gradient(#f8f9fa 0%,#eceef1 50%,#dfe2e7 100%);"></div>
<div style="left:1124px;top:905.5px;width:16px;height:16px;"><svg width="100%" height="100%" viewBox="0 0 16 16" style="display:block;overflow:visible"><text x="8" y="7" font-family="Liberation Sans" font-weight="bold" font-size="7" text-anchor="middle" fill="#111" textLength="15" lengthAdjust="spacingAndGlyphs">0101</text><text x="8" y="14.500" font-family="Liberation Sans" font-weight="bold" font-size="7.500" text-anchor="middle" fill="#111" textLength="14" lengthAdjust="spacingAndGlyphs">DAT</text></svg></div>
<div class="t" style="left:1146.4px;top:907.00px;font-size:13px;letter-spacing:0.552px;color:#111;">Defined Data</div>
<svg style="position:absolute;left:1237px;top:910px" width="7" height="7"><path d="M1 1L6 6M6 1L1 6" stroke="#1a1a1a" stroke-width="1.250" fill="none"/></svg>
<div style="left:364px;top:933.4px;width:1482px;height:23.6px;border:1px solid #7e8085;background:linear-gradient(to right,#9c9c9c 0.00%,#b2b2b2 41.50%,#cfd0d3 84.85%,#d6d9df 92.23%);box-shadow:inset 1px 1px 0 rgba(255,255,255,.4);"></div>
<div style="left:367.5px;top:938px;width:16px;height:16px;"><svg width="100%" height="100%" viewBox="0 0 16 16" style="display:block;overflow:visible"><path d="M1 9l2-1.800l2.800 3c2-4 4.500-7.200 8-9.700l1.700 1.700c-3.500 3.200-6 7.200-8.300 12.800h-2z" fill="#8a1aff"/></svg></div>
<div class="t" style="left:386.4px;top:938.00px;font-size:13px;letter-spacing:0.482px;color:#000;">Bookmarks - (3 bookmarks)</div>
<div style="left:1736px;top:937px;width:16px;height:16px;"><svg width="100%" height="100%" viewBox="0 0 16 16" style="display:block;overflow:visible"><g transform="rotate(-25 8 8)"><ellipse cx="8" cy="8" rx="6.300" ry="7.300" fill="#8a94d8" stroke="#4a54a8" stroke-width=".8" stroke-dasharray="2.300 1.300"/><ellipse cx="8" cy="8" rx="5.300" ry="6.300" fill="#a4acec"/><ellipse cx="8" cy="8" rx="2.200" ry="3.300" fill="#dfe2f0" stroke="#3a4498" stroke-width="1"/><path d="M4 4.500c1.500-2 5-2.500 7-.5" fill="none" stroke="#e4e8fc" stroke-width="1.200"/></g></svg></div>
<div style="left:1759.3px;top:938px;width:14px;height:14px;"><svg width="100%" height="100%" viewBox="0 0 16 16" style="display:block;overflow:visible"><path d="M3 3.500l10 9.500M13 3.500l-10 9.500" stroke="#e02a10" stroke-width="3.400" stroke-linecap="round"/><path d="M3.500 3.500l3 3M12.500 3.500l-3 3" stroke="#f8a080" stroke-width="1" stroke-linecap="round"/></svg></div>
<div style="left:1780.3px;top:937px;width:16px;height:16px;"><svg width="100%" height="100%" viewBox="0 0 16 16" style="display:block;overflow:visible"><path d="M1.500 3.500h12.500M1.500 6.100h12.500M1.500 8.700h12.500M1.500 11.300h12.500M1.500 13.900h12.500" stroke="#111" stroke-width=".9"/></svg></div>
<div style="left:1799.9px;top:935px;width:21.3px;height:20.6px;background:#e9eaee;border-top:2px solid #8a8c91;border-left:2px solid #8a8c91;border-bottom:1.500px solid #fff;border-right:1.500px solid #fff;"></div>
<div style="left:1802.5px;top:937px;width:15px;height:15px;"><svg width="100%" height="100%" viewBox="0 0 16 16" style="display:block;overflow:visible"><rect x="3.500" y="7.500" width="11.500" height="7.500" fill="#fff" stroke="#8c8c8c" stroke-width="1"/><path d="M3.500 7.300h11.500" stroke="#3a9aff" stroke-width="1.400"/><path d="M5 10.500h3.500M9.800 10.500h3.800M5 12.700h3.500M9.800 12.700h3.800" stroke="#c8cad0" stroke-width="1"/><path d="M0.800 1.200h5.700c2.300 0 3.300 1.500 3.300 3.500h2.700l-4.200 4.800l-4.200-4.800h2.700c0-.9-.4-1.300-1.300-1.300h-4.700z" fill="#22e822" stroke="#000" stroke-width=".9" stroke-linejoin="round"/></svg></div>
<div style="left:1822px;top:937px;width:1px;height:16px;background:#a6a8ae;"></div>
<div style="left:1823px;top:937px;width:1px;height:16px;background:#e6e8ec;"></div>
<svg style="position:absolute;left:1828.6px;top:939.6px" width="11" height="11"><path d="M1.200 1.200L9.8 9.8M9.8 1.200L1.200 9.8" stroke="#000" stroke-width="2.3" fill="none"/></svg>
<div style="left:364px;top:960.7px;width:1482px;height:34.3px;background:#d6d9df;border-top:2px solid #7e8085;border-left:2px solid #7e8085;border-bottom:2px solid #fff;border-right:2px solid #fff;"></div>
<div class="t" style="left:369.5px;top:970.00px;font-size:13px;letter-spacing:0.371px;color:#111;">Filter:</div>
<div style="left:418.2px;top:966.3px;width:1358px;height:22.1px;background:#fff;border:1px solid #9a9ca2;border-top-color:#7e8187;"></div>
<div style="left:1784px;top:969px;width:16px;height:16px;"><svg width="100%" height="100%" viewBox="0 0 16 16" style="display:block;overflow:visible"><path d="M3.500 0.800h8l3.700 3.700v10.700h-11.700z" fill="#cfe4fc" stroke="#4a92f0" stroke-width="1" stroke-linejoin="round"/><path d="M11.500 0.800v3.700h3.700" fill="#eaf3fe" stroke="#4a92f0" stroke-width=".8"/><path d="M5 12.500h8.500" stroke="#5aa0f4" stroke-width="1.600"/><path d="M4.500 5.500l-3 3l3 3" fill="none" stroke="#3a8af0" stroke-width="1.500"/><path d="M7.500 5.500l3 3l-3 3" fill="none" stroke="#3a8af0" stroke-width="1.500"/><path d="M5 8.500h4" stroke="#7ab4f8" stroke-width="1"/></svg></div>
<div style="left:1810.5px;top:969.5px;width:14.5px;height:14.5px;"><svg width="100%" height="100%" viewBox="0 0 16 16" style="display:block;overflow:visible"><path d="M1 2.500h13M1 7.300h13M1 12h13" stroke="#8c8c8c" stroke-width="1.200"/><circle cx="4.300" cy="2.500" r="2.200" fill="#8c8c8c"/><circle cx="11.500" cy="7.300" r="2.200" fill="#8c8c8c"/><circle cx="6.500" cy="12" r="2.200" fill="#8c8c8c"/></svg></div>
<div style="left:1828.8px;top:969px;width:16px;height:16px;"><svg width="100%" height="100%" viewBox="0 0 16 16" style="display:block;overflow:visible"><path d="M5 6h5.400l-2.700 3.600z" fill="#111"/></svg></div>
<div style="left:364px;top:995.4px;width:1482px;height:1px;background:#15202e;"></div>
<div style="left:364px;top:996.4px;width:1482px;height:3px;background:linear-gradient(#c6d9ee,#9db6d4);"></div>
<div style="left:374px;top:999px;width:105.5px;height:22.4px;border:1px solid #1c2a40;border-radius:0 0 6px 6px;background:linear-gradient(#f8f9fa 0%,#eceef1 50%,#dfe2e7 100%);"></div>
<div style="left:382px;top:1001.2px;width:16px;height:16px;"><svg width="100%" height="100%" viewBox="0 0 16 16" style="display:block;overflow:visible"><rect x="0.800" y="0.800" width="14" height="10.500" rx="1" fill="#e4e4e8" stroke="#a4a4a8" stroke-width=".8"/><rect x="2.300" y="2.300" width="11" height="7" fill="#5a6ad8"/><path d="M2.300 2.300h11v2.500z" fill="#8a9af0"/><path d="M6 4.500l2 1.500l-2 1.500" fill="none" stroke="#a8b4f8" stroke-width=".8"/><path d="M6.500 11.300v2h3v-2" fill="#d8d8dc" stroke="#a4a4a8" stroke-width=".7"/><rect x="3.500" y="13.300" width="9" height="1.800" rx=".6" fill="#f0f0f2" stroke="#a4a4a8" stroke-width=".7"/></svg></div>
<div class="t" style="left:402.8px;top:1003.00px;font-size:13px;letter-spacing:0.357px;color:#111;">Console</div>
<svg style="position:absolute;left:461.4px;top:1005.7px" width="7" height="7"><path d="M1 1L6 6M6 1L1 6" stroke="#1a1a1a" stroke-width="1.250" fill="none"/></svg>
<div style="left:480.5px;top:999px;width:124.5px;height:22.4px;border:1px solid #1c2a40;border-top:none;border-radius:0 0 6px 6px;background:linear-gradient(#b4c8de 0%,#c3d4e6 40%,#f0f4f9 100%);"></div>
<div style="left:487px;top:1001.2px;width:16px;height:16px;"><svg width="100%" height="100%" viewBox="0 0 16 16" style="display:block;overflow:visible"><path d="M1 9l2-1.800l2.800 3c2-4 4.500-7.200 8-9.700l1.700 1.700c-3.500 3.200-6 7.200-8.300 12.800h-2z" fill="#8a1aff"/></svg></div>
<div class="t" style="left:508.5px;top:1003.00px;font-size:13px;letter-spacing:0.553px;color:#111;">Bookmarks</div>
<svg style="position:absolute;left:586.7px;top:1005.7px" width="7" height="7"><path d="M1 1L6 6M6 1L1 6" stroke="#1a1a1a" stroke-width="1.250" fill="none"/></svg>
<div style="left:1px;top:1032px;width:16px;height:16px;"><svg width="100%" height="100%" viewBox="0 0 16 16" style="display:block;overflow:visible"><circle cx="8" cy="8" r="7.400" fill="#f6f6f6" stroke="#222" stroke-width="1"/><path d="M2.500 9.500c.5-2.500 2.500-4.800 5.500-5.500c1.500-.5 3-.3 4 .2c-1 .3-1.500 1-1.300 1.800c1.300 .5 2 1.800 1.800 3.500c-.2 1.500-1 2.500-2 3c.2-1.300-.2-2.200-1-2.700c-.3 1.500-1.200 2.700-2.500 3.200c.3-1 .2-1.800-.5-2.300c-1 .8-2 .8-3 .3c.8-.3 1.300-.8 1.500-1.500c-.8 .3-1.700 .3-2.500 0z" fill="#e02010"/></svg></div>
<div style="left:20.2px;top:1028.5px;width:1339.5px;height:30px;border-top:2px solid #85878c;border-left:2px solid #85878c;border-right:1.5px solid #f6f6f8;"></div>
<div style="left:1363.3px;top:1028.5px;width:103.3px;height:30px;border-top:2px solid #85878c;border-left:2px solid #85878c;border-right:1.5px solid #f6f6f8;"></div>
<div style="left:1470.2px;top:1028.5px;width:137.1px;height:30px;border-top:2px solid #85878c;border-left:2px solid #85878c;border-right:1.5px solid #f6f6f8;"></div>
<div style="left:1610.8px;top:1028.5px;width:207.5px;height:30px;border-top:2px solid #85878c;border-left:2px solid #85878c;border-right:1.5px solid #f6f6f8;"></div>
<div style="left:1821.9px;top:1028.5px;width:30px;height:30px;border-top:2px solid #85878c;border-left:2px solid #85878c;border-right:1.5px solid #f6f6f8;"></div>
<div class="t" style="left:1367.3px;top:1033.00px;font-size:13px;letter-spacing:0.872px;color:#111;">004f0636</div>
<div class="t" style="left:1477px;top:1033.00px;font-size:13px;letter-spacing:0.440px;color:#111;">HandleDiagReque...</div>
<div class="t" style="left:1618.1px;top:1033.00px;font-size:13px;letter-spacing:0.279px;color:#111;">CALL 0x004e5b60</div>
</div></body></html>
